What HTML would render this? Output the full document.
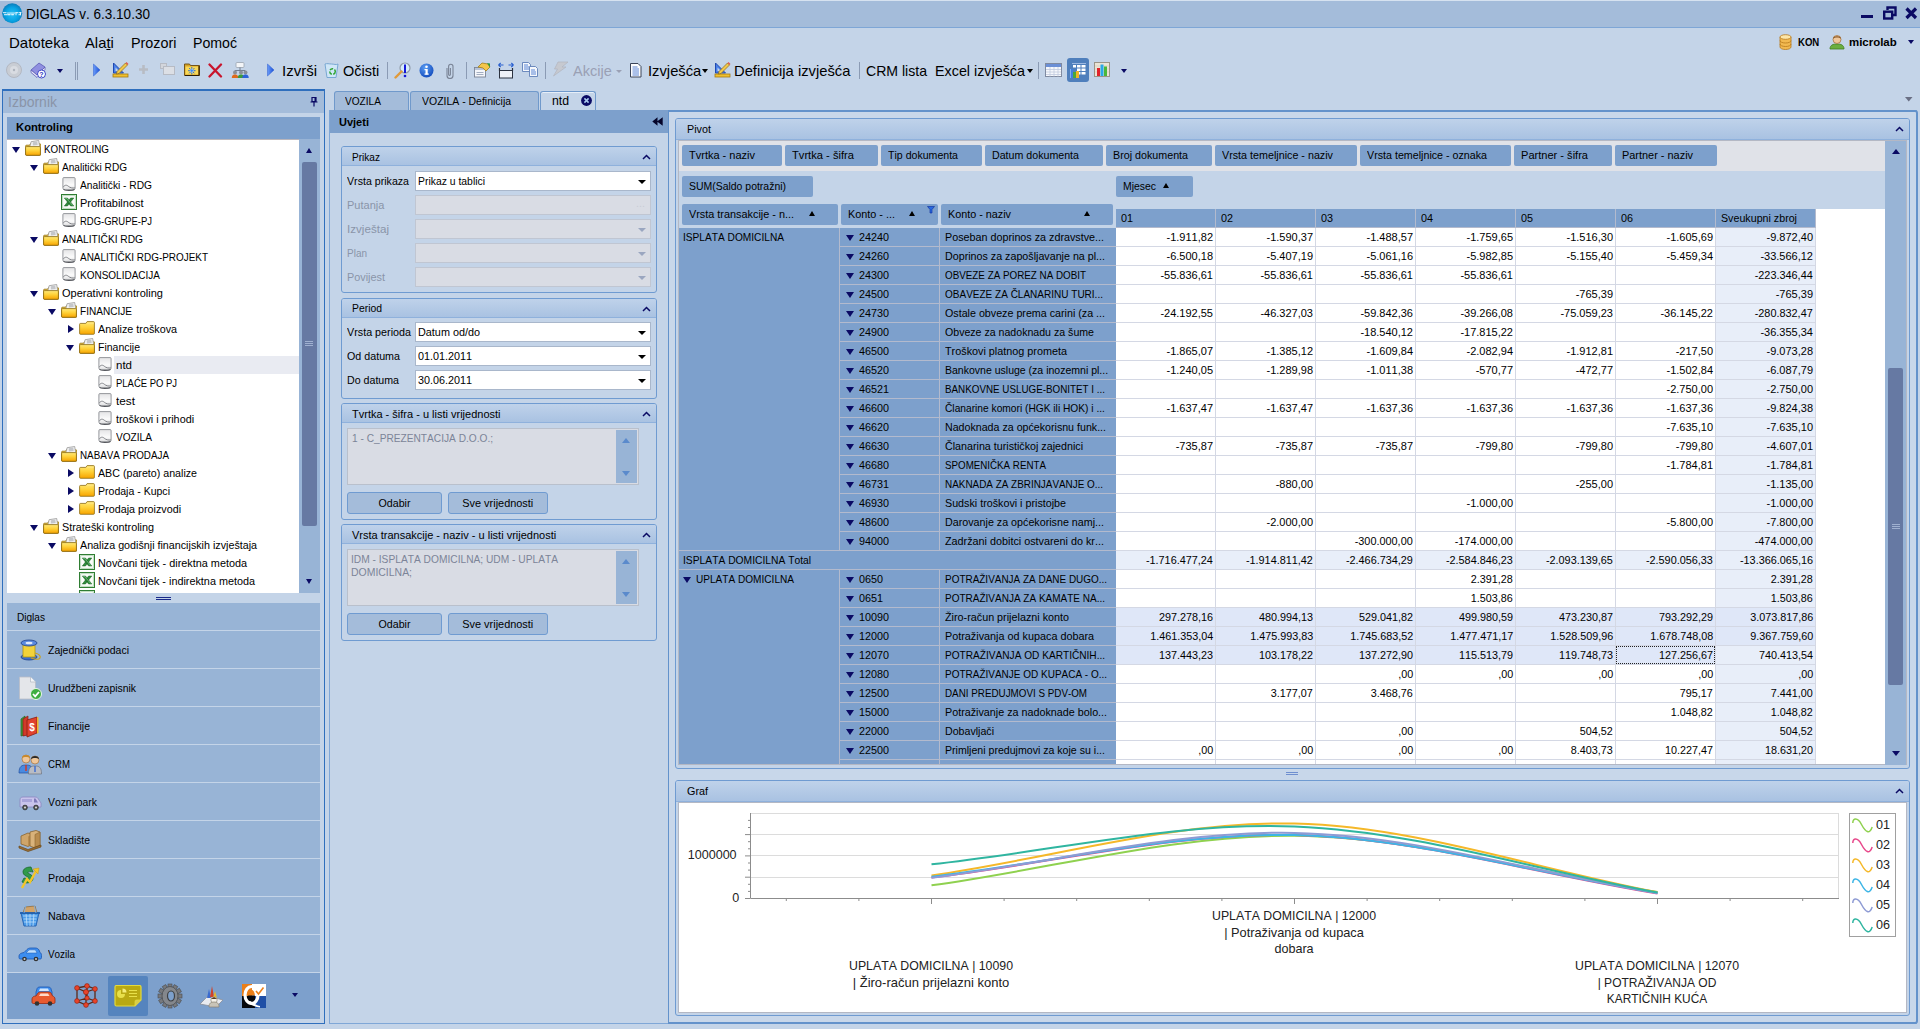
<!DOCTYPE html>
<html><head><meta charset="utf-8"><title>DIGLAS</title>
<style>
*{box-sizing:border-box;margin:0;padding:0}
html,body{width:1920px;height:1029px;overflow:hidden}
body{position:relative;background:#c4d4e8;font-family:"Liberation Sans",sans-serif;font-size:11px;color:#000;line-height:1;font-kerning:none}
.a{position:absolute}
.t{position:absolute;white-space:nowrap;line-height:1;font-kerning:none}
#titlebar{left:0;top:0;width:1920px;height:28px;background:#a4bcda;border-top:1px solid #d6e2f0;border-bottom:1px solid #7ea6d6}
.hdr{background:#7da0cc}
.b{font-weight:bold}
.f15{font-size:15px}
.f14{font-size:14px}
.f13{font-size:13px}
.f12{font-size:12px}
.gray{color:#8a94a6}
.sep{position:absolute;width:1px;background:#8b9bb4;top:62px;height:17px}
.tab{position:absolute;top:91px;height:20px;border:1px solid #7099cb;border-bottom:none;border-radius:3px 3px 0 0;background:#a4bcda}
.tab.act{background:#c4d4e8;height:21px}
.grp{position:absolute;border:1px solid #6f9bd1;border-radius:3px;background:#c4d4e8}
.grph{position:absolute;left:0;top:0;right:0;height:19px;background:linear-gradient(#bfd2ea,#a9c2e2);border-bottom:1px solid #8fb1dc;border-radius:2px 2px 0 0}
.inp{position:absolute;height:20px;border:1px solid #a9b7cb;background:#fff}
.inp.dis{background:#d9dce4;border-color:#c0c6d2}
.btn{position:absolute;height:22px;border:1px solid #6f9bd1;border-radius:3px;background:#a4bcda;text-align:center;line-height:20px;font-size:11px}
.fld{position:absolute;height:21px;background:#7da0cc;border-radius:2px;font-size:11px;line-height:21px;padding-left:6px;white-space:nowrap}
.tri-d{position:absolute;width:0;height:0;border-left:4px solid transparent;border-right:4px solid transparent;border-top:6px solid #0a0a64}
.tri-r{position:absolute;width:0;height:0;border-top:4px solid transparent;border-bottom:4px solid transparent;border-left:6px solid #0a0a64}
.tri-u{position:absolute;width:0;height:0;border-left:4px solid transparent;border-right:4px solid transparent;border-bottom:6px solid #000}
.ob{position:absolute;left:7px;width:313px;height:37px;background:#98b4d6}
.ob span{position:absolute;left:41px;top:14px;font-size:11px;white-space:nowrap}
</style></head>
<body>
<div class="a" id="titlebar"></div>
<svg class="a" style="left:2px;top:3px" width="21" height="21" viewBox="0 0 21 21"><defs><radialGradient id="lg" cx="0.5" cy="0.55" r="0.6"><stop offset="0" stop-color="#2cc0f4"/><stop offset="0.55" stop-color="#08a4e4"/><stop offset="1" stop-color="#0a72b0"/></radialGradient></defs><circle cx="10.200" cy="10.200" r="10" fill="url(#lg)"/><g fill="#e8f6fd"><rect x="1" y="9.200" width="3.500" height="1"/><rect x="2" y="11.200" width="3" height="1"/><rect x="5.500" y="9.200" width="1" height="3"/><rect x="5.500" y="11.200" width="2.500" height="1"/><rect x="7.500" y="9.200" width="1" height="3"/><rect x="9.500" y="9.200" width="1" height="3"/><rect x="9.500" y="11.200" width="2.500" height="1"/><rect x="11.500" y="9.200" width="1" height="2"/><rect x="13.500" y="9.200" width="2.500" height="1"/><rect x="13.500" y="9.200" width="1" height="3"/><rect x="16.500" y="9.200" width="3" height="1"/><rect x="16.500" y="11.200" width="2.500" height="1"/><rect x="18" y="9.200" width="1" height="3"/></g></svg>
<div class="t f14" style="left:26px;top:7px;transform:scaleX(0.965);transform-origin:left center">DIGLAS v. 6.3.10.30</div>
<div class="a" style="left:1861px;top:15px;width:12px;height:3px;background:#0a0a64"></div>
<svg class="a" style="left:1883px;top:6px" width="14" height="14" viewBox="0 0 14 14"><path d="M4.500 4V1.500h8v7.500H10" fill="none" stroke="#0a0a64" stroke-width="2.400"/><rect x="1.200" y="5.700" width="8" height="6.800" fill="none" stroke="#0a0a64" stroke-width="2.400"/></svg>
<svg class="a" style="left:1905px;top:7px" width="13" height="13" viewBox="0 0 13 13"><path d="M1.500 1.500l9.500 9.500M11 1.500l-9.500 9.500" stroke="#0a0a64" stroke-width="3.200"/></svg>
<div class="t f15" style="left:9px;top:35px">Datoteka</div>
<div class="t f15" style="left:85px;top:35px;transform:scaleX(0.986);transform-origin:left center">Ala<span style="text-decoration:underline">t</span>i</div>
<div class="t f15" style="left:131px;top:35px;transform:scaleX(0.957);transform-origin:left center">Prozori</div>
<div class="t f15" style="left:193px;top:35px;transform:scaleX(0.944);transform-origin:left center">Pomoć</div>
<svg class="a" style="left:1779px;top:34px" width="13" height="16" viewBox="0 0 13 16"><path d="M1 3v10c0 1.5 2.5 2.5 5.5 2.5S12 14.500 12 13V3z" fill="#f2b950" stroke="#b87a1c" stroke-width="0.8"/><ellipse cx="6.500" cy="3" rx="5.500" ry="2.300" fill="#fde6a8" stroke="#b87a1c" stroke-width="0.8"/><path d="M1 6.500c0 1.500 2.500 2.500 5.500 2.500s5.500-1 5.500-2.500M1 10c0 1.500 2.500 2.500 5.500 2.500s5.500-1 5.500-2.500" fill="none" stroke="#b87a1c" stroke-width="0.8"/></svg>
<div class="t b" style="left:1798px;top:37px;font-size:11px;transform:scaleX(0.870);transform-origin:left center">KON</div>
<svg class="a" style="left:1829px;top:34px" width="16" height="16" viewBox="0 0 16 16"><path d="M1 15c0-4 3-5 7-5s7 1 7 5z" fill="#6cae3e" stroke="#3f7d1e" stroke-width="0.8"/><circle cx="8" cy="5.500" r="4" fill="#f0c79a" stroke="#a7743d" stroke-width="0.8"/><path d="M4 4.500c0-3 8-3 8 0c-2-1.500-6-1.500-8 0z" fill="#8a5a2b"/></svg>
<div class="t b" style="left:1849px;top:37px;font-size:11px;transform:scaleX(1.040);transform-origin:left center">microlab</div>
<div class="tri-d" style="left:1908px;top:40px;border-left-width:3px;border-right-width:3px;border-top-width:4px"></div>
<svg class="a" style="left:6px;top:62px" width="16" height="16" viewBox="0 0 16 16"><circle cx="8" cy="8" r="7.500" fill="#c9cdd4" stroke="#b3b8c2"/><circle cx="8" cy="8" r="4" fill="#d9dce2"/><circle cx="8" cy="8" r="1.200" fill="#aeb3bd"/></svg>
<svg class="a" style="left:30px;top:62px" width="17" height="17" viewBox="0 0 17 17"><path d="M1 8l8-7 6 4-8 8z" fill="#8f8fe0" stroke="#5b5bb5" stroke-width="0.8"/><path d="M1 8v2.500l6 5 8-8V5l-8 8z" fill="#e6e6f7" stroke="#5b5bb5" stroke-width="0.8"/><circle cx="11.500" cy="12" r="4" fill="#fff" stroke="#3c46c8" stroke-width="1"/><text x="11.500" y="14.600" font-size="7" font-weight="bold" text-anchor="middle" fill="#2a34c0" font-family="Liberation Sans">?</text></svg>
<div class="tri-d" style="left:57px;top:69px;border-left-width:3px;border-right-width:3px;border-top-width:4px"></div>
<div class="a" style="left:75px;top:62px;width:1px;height:18px;background:#8b9bb4"></div><div class="a" style="left:77px;top:62px;width:1px;height:18px;background:#8b9bb4"></div>
<svg class="a" style="left:92px;top:63px" width="9" height="14" viewBox="0 0 9 14"><defs><linearGradient id="pg" x1="0" y1="0" x2="1" y2="0"><stop offset="0" stop-color="#6a9cf8"/><stop offset="1" stop-color="#1c50d8"/></linearGradient></defs><path d="M1.500 1l6.500 6-6.500 6z" fill="url(#pg)" stroke="#2a5ad0" stroke-width="0.500"/></svg>
<svg class="a" style="left:112px;top:61px" width="17" height="17" viewBox="0 0 17 17"><path d="M1.500 2v10h10z" fill="#4a80e8" stroke="#1f49b0" stroke-width="1"/><path d="M3.500 6.500v3.500h3.500z" fill="#c4d4e8"/><rect x="1" y="13" width="15" height="3" fill="#f0c030" stroke="#a67c10" stroke-width="0.8"/><path d="M5 10.500L13.500 2l2 2L7 12.500l-2.600 0.600z" fill="#f2c84a" stroke="#8a6a18" stroke-width="0.700"/><path d="M13.500 2l1-1 2 2-1 1z" fill="#e05a4a"/></svg>
<svg class="a" style="left:139px;top:65px" width="9" height="9" viewBox="0 0 9 9"><path d="M3.200 0h2.600v3.200H9v2.600H5.800V9H3.200V5.800H0V3.200h3.200z" fill="#b8bcc4"/></svg>
<svg class="a" style="left:160px;top:63px" width="16" height="14" viewBox="0 0 16 14"><rect x="0.500" y="0.500" width="6" height="5" fill="#d3d6dc" stroke="#b7bbc4"/><rect x="3.500" y="3.500" width="11" height="8" fill="#dcdfe5" stroke="#b7bbc4"/></svg>
<svg class="a" style="left:184px;top:62px" width="16" height="15" viewBox="0 0 16 15"><path d="M0.500 2h5l1 1.500h9v10h-15z" fill="#d8a428" stroke="#6a4a0e" stroke-width="0.900"/><path d="M1.500 4.500h12.500v8h-12.500z" fill="#f8d858"/><path d="M15 4v9.500H1" fill="none" stroke="#2a1c06" stroke-width="1"/><path d="M7.800 5v7.400M4.100 8.700h7.400M5.200 6.100l5.200 5.200M10.400 6.100l-5.200 5.200" stroke="#1c5fd6" stroke-width="0.900"/><circle cx="7.800" cy="8.700" r="1.600" fill="#3a8af0" stroke="#d8ecff" stroke-width="0.500"/></svg>
<svg class="a" style="left:208px;top:63px" width="15" height="15" viewBox="0 0 15 15"><path d="M1.500 1.500L13 13.500M13 1.500L1.500 13.500" stroke="#c8142c" stroke-width="2.300" stroke-linecap="round"/></svg>
<svg class="a" style="left:231px;top:62px" width="18" height="17" viewBox="0 0 18 17"><rect x="5" y="0.500" width="8" height="5" rx="1" fill="#f3f5f8" stroke="#9aa3b0" stroke-width="0.8"/><path d="M9 5.500v3M4 10V8.500h10V10" fill="none" stroke="#6a7484" stroke-width="0.9"/><circle cx="4" cy="10.500" r="2" fill="#8a8f98"/><path d="M0.800 16c0-3 1.500-3.600 3.200-3.600S7.200 13 7.200 16z" fill="#e06a1a"/><circle cx="10" cy="10.500" r="2" fill="#8a8f98"/><path d="M6.800 16c0-3 1.500-3.600 3.200-3.600s3.200 0.600 3.200 3.600z" fill="#3d9a3a"/><circle cx="14.500" cy="10.500" r="2" fill="#8a8f98"/><path d="M11.300 16c0-3 1.500-3.600 3.200-3.600s3.200 0.600 3.200 3.600z" fill="#2c62d8"/></svg>
<svg class="a" style="left:266px;top:63px" width="9" height="14" viewBox="0 0 9 14"><defs><linearGradient id="pg" x1="0" y1="0" x2="1" y2="0"><stop offset="0" stop-color="#6a9cf8"/><stop offset="1" stop-color="#1c50d8"/></linearGradient></defs><path d="M1.500 1l6.500 6-6.500 6z" fill="url(#pg)" stroke="#2a5ad0" stroke-width="0.500"/></svg>
<div class="t f15" style="left:282px;top:63px">Izvrši</div>
<svg class="a" style="left:324px;top:62px" width="15" height="17" viewBox="0 0 15 17"><path d="M1 2l2 13.500h9L14 2c-2 1.200-4 0-6.500 0S3 1.200 1 2z" fill="#cfe6f7" stroke="#6fa1cf" stroke-width="0.9"/><circle cx="8.500" cy="9.500" r="2.800" fill="none" stroke="#2fa531" stroke-width="1.500" stroke-dasharray="3.500 1.500"/></svg>
<div class="t f15" style="left:343px;top:63px;transform:scaleX(0.963);transform-origin:left center">Očisti</div>
<div class="sep" style="left:387px"></div>
<svg class="a" style="left:394px;top:62px" width="18" height="17" viewBox="0 0 18 17"><circle cx="11" cy="6" r="5" fill="#d6ecfb" stroke="#8f9aa8" stroke-width="1.200"/><path d="M7.500 9.500L1.500 15.500" stroke="#e09a3a" stroke-width="2.400" stroke-linecap="round"/><path d="M11 2.500v8.500" stroke="#1418d8" stroke-width="2"/><circle cx="11" cy="14" r="1.300" fill="#1418d8"/></svg>
<svg class="a" style="left:419px;top:63px" width="15" height="15" viewBox="0 0 15 15"><defs><radialGradient id="ig" cx="0.4" cy="0.3" r="0.8"><stop offset="0" stop-color="#5a9cf2"/><stop offset="1" stop-color="#0b43b8"/></radialGradient></defs><circle cx="7.500" cy="7.500" r="7" fill="url(#ig)"/><rect x="6.500" y="6" width="2.200" height="5.500" fill="#fff"/><rect x="5.500" y="6" width="2" height="1.200" fill="#fff"/><rect x="5.500" y="10.500" width="4.200" height="1.200" fill="#fff"/><circle cx="7.500" cy="3.700" r="1.300" fill="#fff"/></svg>
<svg class="a" style="left:445px;top:63px" width="10" height="16" viewBox="0 0 10 16"><path d="M2 5v7.500a3 3 0 0 0 6 0V3.500a2.200 2.200 0 0 0-4.400 0v8a0.900 0.900 0 0 0 1.800 0V5" fill="none" stroke="#7a8496" stroke-width="1.100"/></svg>
<div class="sep" style="left:466px"></div>
<svg class="a" style="left:474px;top:62px" width="17" height="16" viewBox="0 0 17 16"><rect x="0.500" y="5.500" width="11" height="9.500" fill="#f4f6fa" stroke="#7a8496" stroke-width="0.9"/><rect x="1" y="6" width="10" height="2" fill="#b7c3d8"/><path d="M2.500 10.500h7M2.500 12.500h7" stroke="#9aa6ba" stroke-width="0.9"/><path d="M4 5l4-4 6 1 2 3-4 4-3-3z" fill="#f3c64a" stroke="#a5801c" stroke-width="0.8"/><path d="M13 1l3 0.500v4z" fill="#2f9a3a"/></svg>
<svg class="a" style="left:498px;top:62px" width="16" height="17" viewBox="0 0 16 17"><path d="M0.500 3h5M0.500 3l2.200-2M0.500 3l2.200 2M15.500 3h-5M15.500 3l-2.200-2M15.500 3l-2.200 2" stroke="#2a60d0" stroke-width="1.100" fill="none"/><path d="M1.500 6v3M14.500 6v3" stroke="#2b3240" stroke-width="1.200"/><rect x="1.500" y="8.500" width="13" height="7.500" fill="#eef1f7" stroke="#2b3240" stroke-width="1"/></svg>
<svg class="a" style="left:522px;top:62px" width="16" height="15" viewBox="0 0 16 15"><path d="M0.500 0.500h6l2 2v7h-8z" fill="#f4f7fc" stroke="#5f7fb8" stroke-width="0.9"/><path d="M2 3h4M2 5h5M2 7h5" stroke="#4a78d0" stroke-width="0.9"/><path d="M7.500 4.500h6l2 2v8h-8z" fill="#f4f7fc" stroke="#5f7fb8" stroke-width="0.9"/><path d="M9 8h4M9 10h5M9 12h5" stroke="#4a78d0" stroke-width="0.9"/></svg>
<div class="sep" style="left:545px"></div>
<svg class="a" style="left:552px;top:61px" width="17" height="16" viewBox="0 0 17 16"><path d="M6 1h10l-6 5h4L1.500 15l4-7H2.500z" fill="#c6c9d0" stroke="#b1b5be" stroke-width="0.700"/></svg>
<div class="t f15" style="left:573px;top:63px;color:#9aa0b4;transform:scaleX(0.973);transform-origin:left center">Akcije</div>
<div class="tri-d" style="left:616px;top:70px;border-left-width:3px;border-right-width:3px;border-top-width:3px;border-top-color:#9aa0b4"></div>
<svg class="a" style="left:630px;top:63px" width="12" height="15" viewBox="0 0 12 15"><path d="M0.500 0.500h7.500l3 3v10.500h-10.500z" fill="#fbfcfe" stroke="#3b4458" stroke-width="1"/><path d="M2.500 4h5M2.500 6h6.500M2.500 8h6.500M2.500 10h6.500M2.500 12h6.500" stroke="#4a78d0" stroke-width="0.9"/></svg>
<div class="t f15" style="left:648px;top:63px;transform:scaleX(0.984);transform-origin:left center">Izvješća</div>
<div class="tri-d" style="left:702px;top:69px;border-left-width:3px;border-right-width:3px;border-top-width:4px;border-top-color:#000"></div>
<svg class="a" style="left:714px;top:61px" width="17" height="17" viewBox="0 0 17 17"><path d="M1.500 2v10h10z" fill="#4a80e8" stroke="#1f49b0" stroke-width="1"/><path d="M3.500 6.500v3.500h3.500z" fill="#c4d4e8"/><rect x="1" y="13" width="15" height="3" fill="#f0c030" stroke="#a67c10" stroke-width="0.8"/><path d="M5 10.500L13.500 2l2 2L7 12.500l-2.600 0.600z" fill="#f2c84a" stroke="#8a6a18" stroke-width="0.700"/><path d="M13.500 2l1-1 2 2-1 1z" fill="#e05a4a"/></svg>
<div class="t f15" style="left:734px;top:63px;transform:scaleX(0.983);transform-origin:left center">Definicija izvješća</div>
<div class="sep" style="left:859px"></div>
<div class="t f15" style="left:866px;top:63px;transform:scaleX(0.939);transform-origin:left center">CRM lista</div>
<div class="t f15" style="left:935px;top:63px;transform:scaleX(0.955);transform-origin:left center">Excel izvješća</div>
<div class="tri-d" style="left:1027px;top:69px;border-left-width:3px;border-right-width:3px;border-top-width:4px;border-top-color:#000"></div>
<div class="sep" style="left:1038px"></div>
<svg class="a" style="left:1045px;top:63px" width="17" height="14" viewBox="0 0 17 14"><rect x="0.500" y="0.500" width="16" height="13" fill="#f6f8fc" stroke="#7f8aa0" stroke-width="1"/><rect x="1" y="1" width="15" height="3" fill="#6b8fd6"/><path d="M1 6.500h15M1 9h15M1 11.500h15M5 4v9.500M9 4v9.500M13 4v9.500" stroke="#c2cade" stroke-width="0.8"/></svg>
<div class="a" style="left:1067px;top:58px;width:22px;height:24px;background:#4f7fbc;border-radius:3px"></div>
<svg class="a" style="left:1069px;top:62px" width="18" height="17" viewBox="0 0 18 17"><rect x="3" y="1" width="14" height="1" fill="#9db8e0"/><g fill="#fff"><rect x="4" y="3" width="3" height="2.500"/><rect x="8" y="3" width="3.500" height="2.500"/><rect x="12.500" y="3" width="4" height="2.500"/><rect x="8" y="6.500" width="3.500" height="2.500"/><rect x="12.500" y="6.500" width="4" height="2.500"/><rect x="12.500" y="10" width="4" height="2.500"/><rect x="10" y="10" width="1.500" height="2.500"/></g><rect x="1" y="7" width="3" height="9" fill="#3f7fe0"/><rect x="1" y="7" width="1" height="9" fill="#7fb0f5"/><rect x="4" y="10" width="3" height="6" fill="#4aa83a"/><rect x="7" y="9" width="3" height="7" fill="#f0b428"/></svg>
<svg class="a" style="left:1094px;top:62px" width="16" height="16" viewBox="0 0 16 16"><rect x="0.500" y="0.500" width="15" height="14" fill="#ebe4d6" stroke="#9a9488" stroke-width="1"/><path d="M1 4h14M1 7h14M1 10h14" stroke="#d8cfbc" stroke-width="0.700"/><rect x="3" y="6" width="3" height="8" fill="#e0222a"/><rect x="6.500" y="2.500" width="3" height="11.500" fill="#2aa8e8"/><rect x="10" y="4.500" width="3" height="9.500" fill="#4ab83a"/></svg>
<div class="tri-d" style="left:1121px;top:69px;border-left-width:3px;border-right-width:3px;border-top-width:4px"></div>
<svg class="a" width="0" height="0" style="left:0;top:0"><defs><linearGradient id="gf" x1="0" y1="0" x2="0" y2="1"><stop offset="0" stop-color="#ffe97a"/><stop offset="0.45" stop-color="#ffd23a"/><stop offset="1" stop-color="#f7a400"/></linearGradient><linearGradient id="gb" x1="0" y1="0" x2="0" y2="1"><stop offset="0" stop-color="#ffd640"/><stop offset="1" stop-color="#f0a800"/></linearGradient><linearGradient id="gd" x1="0" y1="0" x2="0" y2="1"><stop offset="0" stop-color="#e4e4e6"/><stop offset="0.6" stop-color="#fbfbfb"/><stop offset="1" stop-color="#dcdcde"/></linearGradient></defs></svg>
<div class="a" style="left:2px;top:89px;width:323px;height:935px;border:1px solid #2f6fbd;border-top-width:2px;background:#c4d4e8"></div>
<div class="a" style="left:3px;top:91px;width:321px;height:22px;background:#a4bcda"></div>
<div class="t f14" style="left:8px;top:95px;color:#8a94a8">Izbornik</div>
<svg class="a" style="left:310px;top:97px" width="8" height="10" viewBox="0 0 8 10"><path d="M2 0.500h4v4H2zM0.500 5h7M4 5v4.500" stroke="#0a0a64" stroke-width="1.200" fill="none"/><rect x="4.500" y="1" width="1.500" height="3.500" fill="#0a0a64"/></svg>
<div class="a hdr" style="left:7px;top:117px;width:313px;height:22px"></div>
<div class="t b" style="left:16px;top:122px;font-size:11px;transform:scaleX(1.023);transform-origin:left center">Kontroling</div>
<div class="a" style="left:7px;top:139px;width:292px;height:454px;background:#fff;overflow:hidden" id="tree">
<div class="tri-d" style="left:5px;top:8px;border-top-width:6px"></div>
<svg class="a" style="left:18px;top:1px" width="16" height="16" viewBox="0 0 16 16"><path d="M0.600 6.200c0-0.700 0.300-1 1-1h2.600l1.400-1.400h9.200c0.700 0 1 0.300 1 1v9.500c0 0.700-0.300 1-1 1H1.600c-0.700 0-1-0.300-1-1z" fill="url(#gb)" stroke="#8a6914" stroke-width="0.800"/><path d="M4.600 7.500l1.500-5.800 7.600-1.200 1.100 6.800z" fill="#f2f2f2" stroke="#8c8c8c" stroke-width="0.700"/><path d="M7.800 2.300l4.400-0.700 0.500 3.300-4.800 0.500z" fill="#c4c6ca"/><path d="M0.600 7.600c0-0.700 0.300-1 1-1h12.800c0.700 0 1 0.300 1 1v6.700c0 0.700-0.300 1-1 1H1.600c-0.700 0-1-0.300-1-1z" fill="url(#gf)" stroke="#8a6914" stroke-width="0.800"/></svg>
<div class="t" style="left:37px;top:5px;transform:scaleX(0.894);transform-origin:left center">KONTROLING</div>
<div class="tri-d" style="left:23px;top:26px;border-top-width:6px"></div>
<svg class="a" style="left:36px;top:19px" width="16" height="16" viewBox="0 0 16 16"><path d="M0.600 6.200c0-0.700 0.300-1 1-1h2.600l1.400-1.400h9.200c0.700 0 1 0.300 1 1v9.500c0 0.700-0.300 1-1 1H1.600c-0.700 0-1-0.300-1-1z" fill="url(#gb)" stroke="#8a6914" stroke-width="0.800"/><path d="M4.600 7.500l1.500-5.800 7.600-1.200 1.100 6.800z" fill="#f2f2f2" stroke="#8c8c8c" stroke-width="0.700"/><path d="M7.800 2.300l4.400-0.700 0.500 3.300-4.800 0.500z" fill="#c4c6ca"/><path d="M0.600 7.600c0-0.700 0.300-1 1-1h12.800c0.700 0 1 0.300 1 1v6.700c0 0.700-0.300 1-1 1H1.600c-0.700 0-1-0.300-1-1z" fill="url(#gf)" stroke="#8a6914" stroke-width="0.800"/></svg>
<div class="t" style="left:55px;top:23px;transform:scaleX(0.917);transform-origin:left center">Analitički RDG</div>
<svg class="a" style="left:55px;top:38px" width="15" height="15" viewBox="0 0 15 15"><path d="M0.900 1.600c0-0.700 0.300-1 1-1h10.200c0.700 0 1 0.300 1 1v9.400c0 1.200-0.800 2-2 2H3.400c-1.600 0-2.500-0.900-2.500-2.500z" fill="url(#gd)" stroke="#8a8c92" stroke-width="0.900"/><path d="M1.200 10.200c1.500-2.600 3.500-2.400 5.200-0.900s4 2 6.500 1.600" fill="none" stroke="#77797f" stroke-width="0.900"/><path d="M1.500 12.400c2 1.200 8 1.400 11 0" fill="none" stroke="#55575c" stroke-width="1.100"/></svg>
<div class="t" style="left:73px;top:41px;transform:scaleX(0.928);transform-origin:left center">Analitički - RDG</div>
<svg class="a" style="left:54px;top:55px" width="16" height="16" viewBox="0 0 16 16"><rect x="0.500" y="0.500" width="15" height="15" fill="#fbfdfb" stroke="#2f7d32" stroke-width="1"/><rect x="1.700" y="1.700" width="12.600" height="12.600" fill="none" stroke="#a9d0aa" stroke-width="0.800"/><path d="M3.300 4h3.200l6.300 8h-3.200zM9.600 4h3.200l-6.300 8H3.300z" fill="#2e8b3a" stroke="#1a5e22" stroke-width="0.500"/><path d="M4.300 4.500h1.600l5.700 7" stroke="#8fd09a" stroke-width="0.600" fill="none"/></svg>
<div class="t" style="left:73px;top:59px">Profitabilnost</div>
<svg class="a" style="left:55px;top:74px" width="15" height="15" viewBox="0 0 15 15"><path d="M0.900 1.600c0-0.700 0.300-1 1-1h10.200c0.700 0 1 0.300 1 1v9.400c0 1.200-0.800 2-2 2H3.400c-1.600 0-2.500-0.900-2.500-2.500z" fill="url(#gd)" stroke="#8a8c92" stroke-width="0.900"/><path d="M1.200 10.200c1.500-2.600 3.500-2.400 5.200-0.900s4 2 6.500 1.600" fill="none" stroke="#77797f" stroke-width="0.900"/><path d="M1.500 12.400c2 1.200 8 1.400 11 0" fill="none" stroke="#55575c" stroke-width="1.100"/></svg>
<div class="t" style="left:73px;top:77px;transform:scaleX(0.860);transform-origin:left center">RDG-GRUPE-PJ</div>
<div class="tri-d" style="left:23px;top:98px;border-top-width:6px"></div>
<svg class="a" style="left:36px;top:91px" width="16" height="16" viewBox="0 0 16 16"><path d="M0.600 6.200c0-0.700 0.300-1 1-1h2.600l1.400-1.400h9.200c0.700 0 1 0.300 1 1v9.500c0 0.700-0.300 1-1 1H1.600c-0.700 0-1-0.300-1-1z" fill="url(#gb)" stroke="#8a6914" stroke-width="0.800"/><path d="M4.600 7.500l1.500-5.800 7.600-1.200 1.100 6.800z" fill="#f2f2f2" stroke="#8c8c8c" stroke-width="0.700"/><path d="M7.800 2.300l4.400-0.700 0.500 3.300-4.800 0.500z" fill="#c4c6ca"/><path d="M0.600 7.600c0-0.700 0.300-1 1-1h12.800c0.700 0 1 0.300 1 1v6.700c0 0.700-0.300 1-1 1H1.600c-0.700 0-1-0.300-1-1z" fill="url(#gf)" stroke="#8a6914" stroke-width="0.800"/></svg>
<div class="t" style="left:55px;top:95px;transform:scaleX(0.927);transform-origin:left center">ANALITIČKI RDG</div>
<svg class="a" style="left:55px;top:110px" width="15" height="15" viewBox="0 0 15 15"><path d="M0.900 1.600c0-0.700 0.300-1 1-1h10.200c0.700 0 1 0.300 1 1v9.400c0 1.200-0.800 2-2 2H3.400c-1.600 0-2.500-0.900-2.500-2.500z" fill="url(#gd)" stroke="#8a8c92" stroke-width="0.900"/><path d="M1.200 10.200c1.500-2.600 3.500-2.400 5.200-0.900s4 2 6.500 1.600" fill="none" stroke="#77797f" stroke-width="0.900"/><path d="M1.500 12.400c2 1.200 8 1.400 11 0" fill="none" stroke="#55575c" stroke-width="1.100"/></svg>
<div class="t" style="left:73px;top:113px;transform:scaleX(0.903);transform-origin:left center">ANALITIČKI RDG-PROJEKT</div>
<svg class="a" style="left:55px;top:128px" width="15" height="15" viewBox="0 0 15 15"><path d="M0.900 1.600c0-0.700 0.300-1 1-1h10.200c0.700 0 1 0.300 1 1v9.400c0 1.200-0.800 2-2 2H3.400c-1.600 0-2.500-0.900-2.500-2.500z" fill="url(#gd)" stroke="#8a8c92" stroke-width="0.900"/><path d="M1.200 10.200c1.500-2.600 3.500-2.400 5.200-0.900s4 2 6.500 1.600" fill="none" stroke="#77797f" stroke-width="0.900"/><path d="M1.500 12.400c2 1.200 8 1.400 11 0" fill="none" stroke="#55575c" stroke-width="1.100"/></svg>
<div class="t" style="left:73px;top:131px;transform:scaleX(0.909);transform-origin:left center">KONSOLIDACIJA</div>
<div class="tri-d" style="left:23px;top:152px;border-top-width:6px"></div>
<svg class="a" style="left:36px;top:145px" width="16" height="16" viewBox="0 0 16 16"><path d="M0.600 6.200c0-0.700 0.300-1 1-1h2.600l1.400-1.400h9.200c0.700 0 1 0.300 1 1v9.500c0 0.700-0.300 1-1 1H1.600c-0.700 0-1-0.300-1-1z" fill="url(#gb)" stroke="#8a6914" stroke-width="0.800"/><path d="M4.600 7.500l1.500-5.800 7.600-1.200 1.100 6.800z" fill="#f2f2f2" stroke="#8c8c8c" stroke-width="0.700"/><path d="M7.800 2.300l4.400-0.700 0.500 3.300-4.800 0.500z" fill="#c4c6ca"/><path d="M0.600 7.600c0-0.700 0.300-1 1-1h12.800c0.700 0 1 0.300 1 1v6.700c0 0.700-0.300 1-1 1H1.600c-0.700 0-1-0.300-1-1z" fill="url(#gf)" stroke="#8a6914" stroke-width="0.800"/></svg>
<div class="t" style="left:55px;top:149px">Operativni kontroling</div>
<div class="tri-d" style="left:41px;top:170px;border-top-width:6px"></div>
<svg class="a" style="left:54px;top:163px" width="16" height="16" viewBox="0 0 16 16"><path d="M0.600 6.200c0-0.700 0.300-1 1-1h2.600l1.400-1.400h9.200c0.700 0 1 0.300 1 1v9.500c0 0.700-0.300 1-1 1H1.600c-0.700 0-1-0.300-1-1z" fill="url(#gb)" stroke="#8a6914" stroke-width="0.800"/><path d="M4.600 7.500l1.500-5.800 7.600-1.200 1.100 6.800z" fill="#f2f2f2" stroke="#8c8c8c" stroke-width="0.700"/><path d="M7.800 2.300l4.400-0.700 0.500 3.300-4.800 0.500z" fill="#c4c6ca"/><path d="M0.600 7.600c0-0.700 0.300-1 1-1h12.800c0.700 0 1 0.300 1 1v6.700c0 0.700-0.300 1-1 1H1.600c-0.700 0-1-0.300-1-1z" fill="url(#gf)" stroke="#8a6914" stroke-width="0.800"/></svg>
<div class="t" style="left:73px;top:167px;transform:scaleX(0.915);transform-origin:left center">FINANCIJE</div>
<div class="tri-r" style="left:61px;top:186px"></div>
<svg class="a" style="left:72px;top:181px" width="16" height="16" viewBox="0 0 16 16"><path d="M0.600 4.400c0-0.700 0.300-1 1-1h5.200l1.300-1.800h6.300c0.700 0 1 0.300 1 1v10.700c0 0.700-0.300 1-1 1H1.600c-0.700 0-1-0.300-1-1z" fill="url(#gf)" stroke="#8a6914" stroke-width="0.800"/><path d="M8.200 3.200h6.600" stroke="#ffe98a" stroke-width="0.800"/></svg>
<div class="t" style="left:91px;top:185px;transform:scaleX(0.979);transform-origin:left center">Analize troškova</div>
<div class="tri-d" style="left:59px;top:206px;border-top-width:6px"></div>
<svg class="a" style="left:72px;top:199px" width="16" height="16" viewBox="0 0 16 16"><path d="M0.600 6.200c0-0.700 0.300-1 1-1h2.600l1.400-1.400h9.200c0.700 0 1 0.300 1 1v9.500c0 0.700-0.300 1-1 1H1.600c-0.700 0-1-0.300-1-1z" fill="url(#gb)" stroke="#8a6914" stroke-width="0.800"/><path d="M4.600 7.500l1.500-5.800 7.600-1.200 1.100 6.800z" fill="#f2f2f2" stroke="#8c8c8c" stroke-width="0.700"/><path d="M7.800 2.300l4.400-0.700 0.500 3.300-4.800 0.500z" fill="#c4c6ca"/><path d="M0.600 7.600c0-0.700 0.300-1 1-1h12.800c0.700 0 1 0.300 1 1v6.700c0 0.700-0.300 1-1 1H1.600c-0.700 0-1-0.300-1-1z" fill="url(#gf)" stroke="#8a6914" stroke-width="0.800"/></svg>
<div class="t" style="left:91px;top:203px;transform:scaleX(0.954);transform-origin:left center">Financije</div>
<div class="a" style="left:107px;top:217px;width:300px;height:18px;background:#e9ebf2"></div>
<svg class="a" style="left:91px;top:218px" width="15" height="15" viewBox="0 0 15 15"><path d="M0.900 1.600c0-0.700 0.300-1 1-1h10.200c0.700 0 1 0.300 1 1v9.400c0 1.200-0.800 2-2 2H3.400c-1.600 0-2.500-0.900-2.500-2.500z" fill="url(#gd)" stroke="#8a8c92" stroke-width="0.900"/><path d="M1.200 10.200c1.500-2.600 3.500-2.400 5.200-0.900s4 2 6.500 1.600" fill="none" stroke="#77797f" stroke-width="0.900"/><path d="M1.500 12.400c2 1.200 8 1.400 11 0" fill="none" stroke="#55575c" stroke-width="1.100"/></svg>
<div class="t" style="left:109px;top:221px;transform:scaleX(1.046);transform-origin:left center">ntd</div>
<svg class="a" style="left:91px;top:236px" width="15" height="15" viewBox="0 0 15 15"><path d="M0.900 1.600c0-0.700 0.300-1 1-1h10.200c0.700 0 1 0.300 1 1v9.400c0 1.200-0.800 2-2 2H3.400c-1.600 0-2.500-0.900-2.500-2.500z" fill="url(#gd)" stroke="#8a8c92" stroke-width="0.900"/><path d="M1.200 10.200c1.500-2.600 3.500-2.400 5.200-0.900s4 2 6.500 1.600" fill="none" stroke="#77797f" stroke-width="0.900"/><path d="M1.500 12.400c2 1.200 8 1.400 11 0" fill="none" stroke="#55575c" stroke-width="1.100"/></svg>
<div class="t" style="left:109px;top:239px;transform:scaleX(0.860);transform-origin:left center">PLAĆE PO PJ</div>
<svg class="a" style="left:91px;top:254px" width="15" height="15" viewBox="0 0 15 15"><path d="M0.900 1.600c0-0.700 0.300-1 1-1h10.200c0.700 0 1 0.300 1 1v9.400c0 1.200-0.800 2-2 2H3.400c-1.600 0-2.500-0.900-2.500-2.500z" fill="url(#gd)" stroke="#8a8c92" stroke-width="0.900"/><path d="M1.200 10.200c1.500-2.600 3.500-2.400 5.200-0.900s4 2 6.500 1.600" fill="none" stroke="#77797f" stroke-width="0.900"/><path d="M1.500 12.400c2 1.200 8 1.400 11 0" fill="none" stroke="#55575c" stroke-width="1.100"/></svg>
<div class="t" style="left:109px;top:257px;transform:scaleX(1.072);transform-origin:left center">test</div>
<svg class="a" style="left:91px;top:272px" width="15" height="15" viewBox="0 0 15 15"><path d="M0.900 1.600c0-0.700 0.300-1 1-1h10.200c0.700 0 1 0.300 1 1v9.400c0 1.200-0.800 2-2 2H3.400c-1.600 0-2.500-0.900-2.500-2.500z" fill="url(#gd)" stroke="#8a8c92" stroke-width="0.900"/><path d="M1.200 10.200c1.500-2.600 3.500-2.400 5.200-0.900s4 2 6.500 1.600" fill="none" stroke="#77797f" stroke-width="0.900"/><path d="M1.500 12.400c2 1.200 8 1.400 11 0" fill="none" stroke="#55575c" stroke-width="1.100"/></svg>
<div class="t" style="left:109px;top:275px;transform:scaleX(0.982);transform-origin:left center">troškovi i prihodi</div>
<svg class="a" style="left:91px;top:290px" width="15" height="15" viewBox="0 0 15 15"><path d="M0.900 1.600c0-0.700 0.300-1 1-1h10.200c0.700 0 1 0.300 1 1v9.400c0 1.200-0.800 2-2 2H3.400c-1.600 0-2.500-0.900-2.500-2.500z" fill="url(#gd)" stroke="#8a8c92" stroke-width="0.900"/><path d="M1.200 10.200c1.500-2.600 3.500-2.400 5.200-0.900s4 2 6.500 1.600" fill="none" stroke="#77797f" stroke-width="0.900"/><path d="M1.500 12.400c2 1.200 8 1.400 11 0" fill="none" stroke="#55575c" stroke-width="1.100"/></svg>
<div class="t" style="left:109px;top:293px;transform:scaleX(0.920);transform-origin:left center">VOZILA</div>
<div class="tri-d" style="left:41px;top:314px;border-top-width:6px"></div>
<svg class="a" style="left:54px;top:307px" width="16" height="16" viewBox="0 0 16 16"><path d="M0.600 6.200c0-0.700 0.300-1 1-1h2.600l1.400-1.400h9.200c0.700 0 1 0.300 1 1v9.500c0 0.700-0.300 1-1 1H1.600c-0.700 0-1-0.300-1-1z" fill="url(#gb)" stroke="#8a6914" stroke-width="0.800"/><path d="M4.600 7.500l1.500-5.800 7.600-1.200 1.100 6.800z" fill="#f2f2f2" stroke="#8c8c8c" stroke-width="0.700"/><path d="M7.800 2.300l4.400-0.700 0.500 3.300-4.800 0.500z" fill="#c4c6ca"/><path d="M0.600 7.600c0-0.700 0.300-1 1-1h12.800c0.700 0 1 0.300 1 1v6.700c0 0.700-0.300 1-1 1H1.600c-0.700 0-1-0.300-1-1z" fill="url(#gf)" stroke="#8a6914" stroke-width="0.800"/></svg>
<div class="t" style="left:73px;top:311px;transform:scaleX(0.893);transform-origin:left center">NABAVA PRODAJA</div>
<div class="tri-r" style="left:61px;top:330px"></div>
<svg class="a" style="left:72px;top:325px" width="16" height="16" viewBox="0 0 16 16"><path d="M0.600 4.400c0-0.700 0.300-1 1-1h5.200l1.300-1.800h6.300c0.700 0 1 0.300 1 1v10.700c0 0.700-0.300 1-1 1H1.600c-0.700 0-1-0.300-1-1z" fill="url(#gf)" stroke="#8a6914" stroke-width="0.800"/><path d="M8.200 3.200h6.600" stroke="#ffe98a" stroke-width="0.800"/></svg>
<div class="t" style="left:91px;top:329px;transform:scaleX(0.970);transform-origin:left center">ABC (pareto) analize</div>
<div class="tri-r" style="left:61px;top:348px"></div>
<svg class="a" style="left:72px;top:343px" width="16" height="16" viewBox="0 0 16 16"><path d="M0.600 4.400c0-0.700 0.300-1 1-1h5.200l1.300-1.800h6.300c0.700 0 1 0.300 1 1v10.700c0 0.700-0.300 1-1 1H1.600c-0.700 0-1-0.300-1-1z" fill="url(#gf)" stroke="#8a6914" stroke-width="0.800"/><path d="M8.200 3.200h6.600" stroke="#ffe98a" stroke-width="0.800"/></svg>
<div class="t" style="left:91px;top:347px;transform:scaleX(0.957);transform-origin:left center">Prodaja - Kupci</div>
<div class="tri-r" style="left:61px;top:366px"></div>
<svg class="a" style="left:72px;top:361px" width="16" height="16" viewBox="0 0 16 16"><path d="M0.600 4.400c0-0.700 0.300-1 1-1h5.200l1.300-1.800h6.300c0.700 0 1 0.300 1 1v10.700c0 0.700-0.300 1-1 1H1.600c-0.700 0-1-0.300-1-1z" fill="url(#gf)" stroke="#8a6914" stroke-width="0.800"/><path d="M8.200 3.200h6.600" stroke="#ffe98a" stroke-width="0.800"/></svg>
<div class="t" style="left:91px;top:365px;transform:scaleX(0.977);transform-origin:left center">Prodaja proizvodi</div>
<div class="tri-d" style="left:23px;top:386px;border-top-width:6px"></div>
<svg class="a" style="left:36px;top:379px" width="16" height="16" viewBox="0 0 16 16"><path d="M0.600 6.200c0-0.700 0.300-1 1-1h2.600l1.400-1.400h9.200c0.700 0 1 0.300 1 1v9.500c0 0.700-0.300 1-1 1H1.600c-0.700 0-1-0.300-1-1z" fill="url(#gb)" stroke="#8a6914" stroke-width="0.800"/><path d="M4.600 7.500l1.500-5.800 7.600-1.200 1.100 6.800z" fill="#f2f2f2" stroke="#8c8c8c" stroke-width="0.700"/><path d="M7.800 2.300l4.400-0.700 0.500 3.300-4.800 0.500z" fill="#c4c6ca"/><path d="M0.600 7.600c0-0.700 0.300-1 1-1h12.800c0.700 0 1 0.300 1 1v6.700c0 0.700-0.300 1-1 1H1.600c-0.700 0-1-0.300-1-1z" fill="url(#gf)" stroke="#8a6914" stroke-width="0.800"/></svg>
<div class="t" style="left:55px;top:383px;transform:scaleX(0.984);transform-origin:left center">Strateški kontroling</div>
<div class="tri-d" style="left:41px;top:404px;border-top-width:6px"></div>
<svg class="a" style="left:54px;top:397px" width="16" height="16" viewBox="0 0 16 16"><path d="M0.600 6.200c0-0.700 0.300-1 1-1h2.600l1.400-1.400h9.200c0.700 0 1 0.300 1 1v9.500c0 0.700-0.300 1-1 1H1.600c-0.700 0-1-0.300-1-1z" fill="url(#gb)" stroke="#8a6914" stroke-width="0.800"/><path d="M4.600 7.500l1.500-5.800 7.600-1.200 1.100 6.800z" fill="#f2f2f2" stroke="#8c8c8c" stroke-width="0.700"/><path d="M7.800 2.300l4.400-0.700 0.500 3.300-4.800 0.500z" fill="#c4c6ca"/><path d="M0.600 7.600c0-0.700 0.300-1 1-1h12.800c0.700 0 1 0.300 1 1v6.700c0 0.700-0.300 1-1 1H1.600c-0.700 0-1-0.300-1-1z" fill="url(#gf)" stroke="#8a6914" stroke-width="0.800"/></svg>
<div class="t" style="left:73px;top:401px;transform:scaleX(0.975);transform-origin:left center">Analiza godišnji financijskih izvještaja</div>
<svg class="a" style="left:72px;top:415px" width="16" height="16" viewBox="0 0 16 16"><rect x="0.500" y="0.500" width="15" height="15" fill="#fbfdfb" stroke="#2f7d32" stroke-width="1"/><rect x="1.700" y="1.700" width="12.600" height="12.600" fill="none" stroke="#a9d0aa" stroke-width="0.800"/><path d="M3.300 4h3.200l6.300 8h-3.200zM9.600 4h3.200l-6.300 8H3.300z" fill="#2e8b3a" stroke="#1a5e22" stroke-width="0.500"/><path d="M4.300 4.500h1.600l5.700 7" stroke="#8fd09a" stroke-width="0.600" fill="none"/></svg>
<div class="t" style="left:91px;top:419px;transform:scaleX(0.987);transform-origin:left center">Novčani tijek - direktna metoda</div>
<svg class="a" style="left:72px;top:433px" width="16" height="16" viewBox="0 0 16 16"><rect x="0.500" y="0.500" width="15" height="15" fill="#fbfdfb" stroke="#2f7d32" stroke-width="1"/><rect x="1.700" y="1.700" width="12.600" height="12.600" fill="none" stroke="#a9d0aa" stroke-width="0.800"/><path d="M3.300 4h3.200l6.300 8h-3.200zM9.600 4h3.200l-6.300 8H3.300z" fill="#2e8b3a" stroke="#1a5e22" stroke-width="0.500"/><path d="M4.300 4.500h1.600l5.700 7" stroke="#8fd09a" stroke-width="0.600" fill="none"/></svg>
<div class="t" style="left:91px;top:437px;transform:scaleX(0.984);transform-origin:left center">Novčani tijek - indirektna metoda</div>
<svg class="a" style="left:72px;top:451px" width="16" height="16" viewBox="0 0 16 16"><rect x="0.500" y="0.500" width="15" height="15" fill="#fbfdfb" stroke="#2f7d32" stroke-width="1"/><rect x="1.700" y="1.700" width="12.600" height="12.600" fill="none" stroke="#a9d0aa" stroke-width="0.800"/><path d="M3.300 4h3.200l6.300 8h-3.200zM9.600 4h3.200l-6.300 8H3.300z" fill="#2e8b3a" stroke="#1a5e22" stroke-width="0.500"/><path d="M4.300 4.500h1.600l5.700 7" stroke="#8fd09a" stroke-width="0.600" fill="none"/></svg>
<div class="t" style="left:91px;top:455px"></div>
</div>
<div class="a" style="left:7px;top:139px;width:313px;height:1px;background:#b9b6bc"></div>
<div class="a" style="left:299px;top:139px;width:21px;height:454px;background:#98b4d6"></div>
<div class="a" style="left:302px;top:162px;width:15px;height:364px;background:#6679a3;border-radius:2px"></div>
<div class="tri-u" style="left:306px;top:148px;border-bottom-color:#0a0a64;border-bottom-width:5px;border-left-width:3.500px;border-right-width:3.500px"></div>
<div class="tri-d" style="left:306px;top:579px;border-top-width:5px;border-left-width:3.500px;border-right-width:3.500px"></div>
<div class="a" style="left:305px;top:341px;width:8px;height:1px;background:#9fb0d0"></div><div class="a" style="left:305px;top:343px;width:8px;height:1px;background:#9fb0d0"></div><div class="a" style="left:305px;top:345px;width:8px;height:1px;background:#9fb0d0"></div>
<div class="a" style="left:156px;top:597px;width:15px;height:1px;background:#1a2a8a"></div><div class="a" style="left:156px;top:599px;width:15px;height:1px;background:#1a2a8a"></div>
<div class="a" style="left:7px;top:603px;width:313px;height:27px;background:#98b4d6"></div>
<div class="t" style="left:17px;top:612px;transform:scaleX(0.916);transform-origin:left center">Diglas</div>
<div class="ob" style="top:631px"><span style="transform:scaleX(0.953);transform-origin:left center">Zajednički podaci</span></div>
<svg class="a" style="left:18px;top:638px" width="24" height="24" viewBox="0 0 24 24"><ellipse cx="11" cy="19" rx="8" ry="3" fill="#3b6fd0" stroke="#1d3f8a" stroke-width="0.8"/><rect x="5" y="5" width="12" height="14" fill="#f2d23a" stroke="#b39614" stroke-width="0.8"/><ellipse cx="11" cy="5" rx="8" ry="3" fill="#5a8ae0" stroke="#1d3f8a" stroke-width="0.8"/><ellipse cx="11" cy="5" rx="3.500" ry="1.300" fill="#dfe9fb"/><path d="M17 15c4 1 6 3 5 5s-6 1-9 0" fill="none" stroke="#c9a21a" stroke-width="1.200"/></svg>
<div class="ob" style="top:669px"><span style="transform:scaleX(0.947);transform-origin:left center">Urudžbeni zapisnik</span></div>
<svg class="a" style="left:18px;top:676px" width="24" height="24" viewBox="0 0 24 24"><path d="M1.500 1h11l5 5v17h-16z" fill="#e4e6ea" stroke="#b9bdc6" stroke-width="0.8"/><path d="M12.500 1v5h5" fill="#f4f5f7" stroke="#b9bdc6" stroke-width="0.8"/><circle cx="18" cy="18" r="5.500" fill="#3fae3f" stroke="#e9f7e9" stroke-width="1"/><path d="M15 18l2.200 2.300 3.800-4.300" fill="none" stroke="#fff" stroke-width="1.800"/></svg>
<div class="ob" style="top:707px"><span style="transform:scaleX(0.954);transform-origin:left center">Financije</span></div>
<svg class="a" style="left:18px;top:714px" width="24" height="24" viewBox="0 0 24 24"><path d="M3 5l4-3v19l-4 1z" fill="#3f9a3a" stroke="#256a22" stroke-width="0.700"/><path d="M5 5l5-3v19l-5 1z" fill="#d03a2a" stroke="#8a1d12" stroke-width="0.700"/><path d="M9 6l10-3v16l-10 4z" fill="#e0422e" stroke="#8a1d12" stroke-width="0.800"/><path d="M19 3l1.500 0.500v15.500l-1.500 0.500z" fill="#f0b428"/><text x="14" y="17" font-size="10" font-weight="bold" text-anchor="middle" fill="#fff" font-family="Liberation Sans">$</text></svg>
<div class="ob" style="top:745px"><span style="transform:scaleX(0.878);transform-origin:left center">CRM</span></div>
<svg class="a" style="left:18px;top:752px" width="24" height="24" viewBox="0 0 24 24"><circle cx="8" cy="7" r="4" fill="#f0c79a" stroke="#a7743d" stroke-width="0.700"/><path d="M4 6c0-4 8-4 8 0c-2-1.500-6-1.500-8 0z" fill="#c98a2b"/><path d="M1 21c0-7 3-8 7-8s7 1 7 8z" fill="#4a8ae0" stroke="#24509e" stroke-width="0.700"/><path d="M8 13v6" stroke="#d03a2a" stroke-width="1.500"/><circle cx="17" cy="8" r="4" fill="#f0c79a" stroke="#a7743d" stroke-width="0.700"/><path d="M13 7c0-4 8-4 8 0c-2-1.500-6-1.500-8 0z" fill="#2a2a2a"/><path d="M10.500 22c0-7 2.500-8 6.500-8s6.500 1 6.500 8z" fill="#b9bcc4" stroke="#6f737c" stroke-width="0.700"/><path d="M17 14v6" stroke="#3f6fd0" stroke-width="1.500"/></svg>
<div class="ob" style="top:783px"><span style="transform:scaleX(0.943);transform-origin:left center">Vozni park</span></div>
<svg class="a" style="left:18px;top:790px" width="24" height="24" viewBox="0 0 24 24"><path d="M2 10c0-2 1-3 3-3h12c2 0 3 1 4 3l2 3v4H2z" fill="#c9c4ec" stroke="#8b86c0" stroke-width="0.800"/><path d="M16 8.500h1.500l2.500 4h-4z" fill="#7f7ab8"/><rect x="4" y="9" width="10" height="3" fill="#a9a4da"/><circle cx="7" cy="17.500" r="2.400" fill="#555" stroke="#222" stroke-width="0.600"/><circle cx="18" cy="17.500" r="2.400" fill="#555" stroke="#222" stroke-width="0.600"/><circle cx="7" cy="17.500" r="1" fill="#ddd"/><circle cx="18" cy="17.500" r="1" fill="#ddd"/></svg>
<div class="ob" style="top:821px"><span style="transform:scaleX(0.941);transform-origin:left center">Skladište</span></div>
<svg class="a" style="left:18px;top:828px" width="24" height="24" viewBox="0 0 24 24"><path d="M3 8l7-3 4 1.500v10l-4 2-7-2.500z" fill="#cfa56a" stroke="#8a6430" stroke-width="0.800"/><path d="M10 8.500l4-2v10l-4 2z" fill="#b98c4e"/><path d="M12 4l6-1.500 4 1.500v13l-5 3-5-2z" fill="#d9b27a" stroke="#8a6430" stroke-width="0.800"/><path d="M17 6.500l5-2.500v13l-5 3z" fill="#b98c4e" stroke="#8a6430" stroke-width="0.600"/><path d="M1 18l9 3.500 13-4.500v2l-13 4.500L1 20z" fill="#9a6e35" stroke="#6a4718" stroke-width="0.700"/></svg>
<div class="ob" style="top:859px"><span style="transform:scaleX(0.976);transform-origin:left center">Prodaja</span></div>
<svg class="a" style="left:18px;top:866px" width="24" height="24" viewBox="0 0 24 24"><path d="M13 1c-5 0-8 2-8 5s3 4 5 5-1 2-4 1l-2 4c4 2 11 1 11-4 0-3-4-4-5-5s2-2 5-1z" fill="#2f9a4a" stroke="#1d6a30" stroke-width="0.800"/><path d="M4 22l5-9 3 3 6-11" fill="none" stroke="#f2c52a" stroke-width="2.400"/><path d="M15 3l6-1-1 6z" fill="#f2c52a" stroke="#c99a10" stroke-width="0.500"/></svg>
<div class="ob" style="top:897px"><span style="transform:scaleX(0.976);transform-origin:left center">Nabava</span></div>
<svg class="a" style="left:18px;top:904px" width="24" height="24" viewBox="0 0 24 24"><path d="M3 9h18l-3 13H6z" fill="#4a9ae8" stroke="#1f5fb0" stroke-width="0.900"/><path d="M5 12h14M5.500 15h13M6 18h12M8 9l1 13M12 9v13M16 9l-1 13" stroke="#bfe0fb" stroke-width="0.800"/><path d="M7 3l10-1 2 7H5z" fill="#d2a368" stroke="#8a6430" stroke-width="0.700"/><path d="M2 9h20" stroke="#1f5fb0" stroke-width="1.800"/><path d="M8 1l-2 8M16 1l2 8" stroke="#7ab4ee" stroke-width="0.800"/></svg>
<div class="ob" style="top:935px"><span style="transform:scaleX(0.901);transform-origin:left center">Vozila</span></div>
<svg class="a" style="left:18px;top:942px" width="24" height="24" viewBox="0 0 24 24"><path d="M1 14c0-2 2-3 5-3.500l3-3c1-1 2-1.500 4-1.500h4c2 0 3 0.500 4 2l1 2.500c1 0.500 1.500 1.500 1.500 3v2c0 1-0.500 1.500-1.500 1.500H2.500c-1 0-1.500-0.500-1.500-1.500z" fill="#3d8ef0" stroke="#1a55b0" stroke-width="0.800"/><path d="M8 11l2.500-2.500c0.500-0.500 1-0.700 2-0.700h3.500c1 0 1.500 0.200 2 1l1 2.200z" fill="#bfe0ff" stroke="#1a55b0" stroke-width="0.500"/><circle cx="6.500" cy="17" r="2.300" fill="#333"/><circle cx="6.500" cy="17" r="1" fill="#ccc"/><circle cx="18" cy="17" r="2.300" fill="#333"/><circle cx="18" cy="17" r="1" fill="#ccc"/></svg>
<div class="a hdr" style="left:7px;top:973px;width:313px;height:46px"></div>
<div class="a" style="left:108px;top:976px;width:40px;height:40px;background:#5584be;border-radius:2px"></div>
<svg class="a" style="left:31px;top:983px" width="26" height="26" viewBox="0 0 26 26"><path d="M6 6c0-1 1-2 3-2h8c2 0 3 1 3 2l1 3v4H5V9z" fill="#3d8ef0" stroke="#1a55b0" stroke-width="0.800"/><path d="M8 8l1-2.500h8L18 8z" fill="#cfe6ff"/><path d="M1 16c0-2 2-3 4-3l2-3c1-1 2-1 3-1h7c2 0 3 0.500 3.500 2l1 2c1.500 0.500 2.500 1.500 2.500 3v3c0 1-0.500 1.500-1.500 1.500H2.500C1.500 20.500 1 20 1 19z" fill="#e85a30" stroke="#9a2a10" stroke-width="0.800"/><path d="M8 13l1.500-2.500h7.500l1.500 2.500z" fill="#ffd9c8"/><circle cx="6" cy="20.500" r="2.300" fill="#333"/><circle cx="19" cy="20.500" r="2.300" fill="#333"/></svg>
<svg class="a" style="left:73px;top:983px" width="26" height="26" viewBox="0 0 26 26"><path d="M4 5l10-2 8 3v12l-9 4-9-4zM4 5l9 4 9-3M13 9v13M4 5v13M14 3v12l8 3M14 15l-10 3" fill="none" stroke="#5a2a1a" stroke-width="1.300"/><g fill="#e8442a" stroke="#8a1d0c" stroke-width="0.600"><circle cx="4" cy="5" r="2.400"/><circle cx="14" cy="3" r="2.400"/><circle cx="22" cy="6" r="2.400"/><circle cx="13" cy="9" r="2.600"/><circle cx="4" cy="18" r="2.400"/><circle cx="13" cy="22" r="2.400"/><circle cx="22" cy="18" r="2.400"/><circle cx="14" cy="15" r="2.200"/></g></svg>
<svg class="a" style="left:114px;top:985px" width="28" height="22" viewBox="0 0 28 22"><path d="M1 2c0-1 0.500-1.500 1.500-1.500h23c1 0 1.500 0.500 1.500 1.500v13l-6 6H2.500c-1 0-1.500-0.500-1.500-1.500z" fill="#b9a912" stroke="#e4da3c" stroke-width="1.200"/><path d="M21 21v-4.500c0-1 0.500-1.500 1.500-1.500H27" fill="#d8cc4a" stroke="#e4da3c" stroke-width="0.800"/><path d="M7 5a4 4 0 1 0 4 4H7z" fill="#e8e04a"/><path d="M8.500 3.500v4h4a4 4 0 0 0-4-4z" fill="#f4ec7a"/><path d="M15 5.500h8M15 8.500h8M15 11.500h8" stroke="#e8e04a" stroke-width="1.200"/></svg>
<svg class="a" style="left:157px;top:983px" width="26" height="26" viewBox="0 0 26 26"><g transform="translate(13 13)"><g fill="#77797d" stroke="#4a4c50" stroke-width="0.600"><rect x="-2" y="-12" width="4" height="6" transform="rotate(0)"/><rect x="-2" y="-12" width="4" height="6" transform="rotate(30)"/><rect x="-2" y="-12" width="4" height="6" transform="rotate(60)"/><rect x="-2" y="-12" width="4" height="6" transform="rotate(90)"/><rect x="-2" y="-12" width="4" height="6" transform="rotate(120)"/><rect x="-2" y="-12" width="4" height="6" transform="rotate(150)"/><rect x="-2" y="-12" width="4" height="6" transform="rotate(180)"/><rect x="-2" y="-12" width="4" height="6" transform="rotate(210)"/><rect x="-2" y="-12" width="4" height="6" transform="rotate(240)"/><rect x="-2" y="-12" width="4" height="6" transform="rotate(270)"/><rect x="-2" y="-12" width="4" height="6" transform="rotate(300)"/><rect x="-2" y="-12" width="4" height="6" transform="rotate(330)"/></g><ellipse cx="0" cy="0" rx="8" ry="9.500" fill="#84878c" stroke="#4a4c50" stroke-width="0.800"/><ellipse cx="1" cy="0" rx="3.500" ry="5" fill="#7da0cc" stroke="#3e4044" stroke-width="1.200"/></g></svg>
<svg class="a" style="left:199px;top:983px" width="26" height="26" viewBox="0 0 26 26"><path d="M1 21l8-8 15 4-7 7z" fill="#e9ebf0" stroke="#8a8f9a" stroke-width="0.800"/><path d="M8 15l2-9 2 9z" fill="#3a6ad0"/><path d="M11 14l2-11 2 11z" fill="#d0422a"/><path d="M14 15l2-7 2 7z" fill="#e8b82a"/><circle cx="15" cy="17" r="3.200" fill="#f6f2ea" stroke="#8a8272" stroke-width="0.700"/><path d="M10 24c0-4 2-5 5-5s5 1 5 5z" fill="#c9c4b8" stroke="#8a8272" stroke-width="0.700"/><path d="M12 16l3-2 3 2" fill="#5a3a1a"/></svg>
<svg class="a" style="left:242px;top:984px" width="24" height="24" viewBox="0 0 24 24"><rect x="0" y="0" width="24" height="24" fill="#fff"/><rect x="0" y="0" width="10" height="12" fill="#ea7f1a"/><rect x="0" y="12" width="13" height="12" fill="#05070c"/><rect x="13" y="12" width="11" height="12" fill="#1f4fa6"/><ellipse cx="9.500" cy="11" rx="6.500" ry="8.500" fill="none" stroke="#fff" stroke-width="3.200"/><path d="M6.100 11.500A3.400 5.800 0 0 1 12.900 11.500z" fill="#ea7f1a"/><path d="M6.100 11.500A3.400 5.800 0 0 0 12.900 11.500z" fill="#05070c"/><path d="M3 12h7v6H3z" fill="#05070c" opacity="0"/><path d="M7 17c3 0 5 3 9 4.500l2 0.500v1.500c-5 0-8-3-12-3.500z" fill="#fff"/><path d="M14 7l2.500 3 5-6.500" fill="none" stroke="#ea7f1a" stroke-width="1.600"/></svg>
<div class="tri-d" style="left:292px;top:993px;border-left-width:3px;border-right-width:3px;border-top-width:4px"></div>
<div class="tab" style="left:334px;width:75px"></div><div class="t" style="left:345px;top:96px;transform:scaleX(0.920);transform-origin:left center">VOZILA</div>
<div class="tab" style="left:410px;width:129px"></div><div class="t" style="left:422px;top:96px;transform:scaleX(0.952);transform-origin:left center">VOZILA - Definicija</div>
<div class="a" style="left:329px;top:110px;width:1588px;height:914px;border:1px solid #7fa7d7;border-top:1px solid #7fa7d7;background:#c4d4e8"></div>
<div class="tab act" style="left:540px;width:56px;box-shadow:inset 0 1px 0 #e6eef8"></div><div class="t f12" style="left:552px;top:95px;transform:scaleX(1.024);transform-origin:left center">ntd</div>
<svg class="a" style="left:581px;top:95px" width="11" height="11" viewBox="0 0 11 11"><circle cx="5.500" cy="5.500" r="5.400" fill="#0a0a64"/><path d="M3.400 3.400l4.200 4.200M7.600 3.400L3.400 7.600" stroke="#a9c9ee" stroke-width="1.500"/></svg>
<svg class="a" style="left:1905px;top:97px" width="8" height="5" viewBox="0 0 8 5"><path d="M0 0h7.500L3.750 4.500z" fill="#6a6f84"/></svg>
<div class="a" style="left:330px;top:111px;width:338px;height:912px;background:#c4d4e8"></div>
<div class="a hdr" style="left:330px;top:110px;width:338px;height:23px"></div>
<div class="t b" style="left:339px;top:117px;font-size:11px">Uvjeti</div>
<svg class="a" style="left:652px;top:117px" width="11" height="9" viewBox="0 0 11 9"><path d="M5.500 0.300v8.400L0.300 4.500zM10.700 0.300v8.400L5 4.500z" fill="#05052a"/></svg>
<div class="grp" style="left:341px;top:146px;width:316px;height:147px"><div class="grph"></div></div>
<div class="t" style="left:352px;top:152px;transform:scaleX(0.916);transform-origin:left center">Prikaz</div>
<svg class="a" style="left:642px;top:154px" width="9" height="6" viewBox="0 0 9 6"><path d="M1 5l3.500-3.500L8 5" fill="none" stroke="#0a0a64" stroke-width="1.500"/></svg>
<div class="t" style="left:347px;top:176px;;transform:scaleX(0.966);transform-origin:left center">Vrsta prikaza</div>
<div class="inp" style="left:415px;top:171px;width:236px"></div>
<div class="t" style="left:418px;top:176px;transform:scaleX(0.945);transform-origin:left center">Prikaz u tablici</div>
<div class="tri-d" style="left:638px;top:180px;border-left-width:4px;border-right-width:4px;border-top-width:4px;border-top-color:#000"></div>
<div class="t" style="left:347px;top:200px;color:#8a94a8">Putanja</div>
<div class="inp dis" style="left:415px;top:195px;width:236px"></div>
<div class="t" style="left:636px;top:198px;color:#c9ccd6;transform:scaleX(0.981);transform-origin:left center">...</div>
<div class="t" style="left:347px;top:224px;color:#8a94a8;transform:scaleX(1.057);transform-origin:left center">Izvještaj</div>
<div class="inp dis" style="left:415px;top:219px;width:236px"></div>
<div class="tri-d" style="left:638px;top:228px;border-left-width:4px;border-right-width:4px;border-top-width:4px;border-top-color:#9aa6c0"></div>
<div class="t" style="left:347px;top:248px;color:#8a94a8;transform:scaleX(0.909);transform-origin:left center">Plan</div>
<div class="inp dis" style="left:415px;top:243px;width:236px"></div>
<div class="tri-d" style="left:638px;top:252px;border-left-width:4px;border-right-width:4px;border-top-width:4px;border-top-color:#9aa6c0"></div>
<div class="t" style="left:347px;top:272px;color:#8a94a8;transform:scaleX(0.987);transform-origin:left center">Povijest</div>
<div class="inp dis" style="left:415px;top:267px;width:236px"></div>
<div class="tri-d" style="left:638px;top:276px;border-left-width:4px;border-right-width:4px;border-top-width:4px;border-top-color:#9aa6c0"></div>
<div class="grp" style="left:341px;top:298px;width:316px;height:101px"><div class="grph"></div></div>
<div class="t" style="left:352px;top:303px;transform:scaleX(0.944);transform-origin:left center">Period</div>
<svg class="a" style="left:642px;top:306px" width="9" height="6" viewBox="0 0 9 6"><path d="M1 5l3.500-3.500L8 5" fill="none" stroke="#0a0a64" stroke-width="1.500"/></svg>
<div class="t" style="left:347px;top:327px;transform:scaleX(0.978);transform-origin:left center">Vrsta perioda</div>
<div class="inp" style="left:415px;top:322px;width:236px"></div>
<div class="t" style="left:418px;top:327px;transform:scaleX(0.985);transform-origin:left center">Datum od/do</div>
<div class="tri-d" style="left:638px;top:331px;border-left-width:4px;border-right-width:4px;border-top-width:4px;border-top-color:#000"></div>
<div class="t" style="left:347px;top:351px;transform:scaleX(0.974);transform-origin:left center">Od datuma</div>
<div class="inp" style="left:415px;top:346px;width:236px"></div>
<div class="t" style="left:418px;top:351px;transform:scaleX(0.981);transform-origin:left center">01.01.2011</div>
<div class="tri-d" style="left:638px;top:355px;border-left-width:4px;border-right-width:4px;border-top-width:4px;border-top-color:#000"></div>
<div class="t" style="left:347px;top:375px;transform:scaleX(0.967);transform-origin:left center">Do datuma</div>
<div class="inp" style="left:415px;top:370px;width:236px"></div>
<div class="t" style="left:418px;top:375px;transform:scaleX(0.981);transform-origin:left center">30.06.2011</div>
<div class="tri-d" style="left:638px;top:379px;border-left-width:4px;border-right-width:4px;border-top-width:4px;border-top-color:#000"></div>
<div class="grp" style="left:341px;top:403px;width:316px;height:117px"><div class="grph"></div></div>
<div class="t" style="left:352px;top:409px">Tvrtka - šifra - u listi vrijednosti</div>
<svg class="a" style="left:642px;top:411px" width="9" height="6" viewBox="0 0 9 6"><path d="M1 5l3.500-3.500L8 5" fill="none" stroke="#0a0a64" stroke-width="1.500"/></svg>
<div class="a" style="left:347px;top:428px;width:292px;height:57px;background:#d9dce4;border:1px solid #b9c0cc"></div>
<div class="a" style="left:616px;top:430px;width:21px;height:53px;background:#98b4d6"></div>
<div class="tri-u" style="left:622px;top:438px;border-bottom-color:#5a8acc;border-bottom-width:5px"></div>
<div class="tri-d" style="left:622px;top:471px;border-top-color:#5a8acc;border-top-width:5px"></div>
<div class="t" style="left:352px;top:433px;color:#7c8498;transform:scaleX(0.923);transform-origin:left center">1 - C_PREZENTACIJA D.O.O.;</div>
<div class="btn" style="left:347px;top:492px;width:95px"><span style="display:inline-block;transform:scaleX(0.969)">Odabir</span></div>
<div class="btn" style="left:448px;top:492px;width:100px"><span style="display:inline-block;transform:scaleX(0.993)">Sve vrijednosti</span></div>
<div class="grp" style="left:341px;top:524px;width:316px;height:117px"><div class="grph"></div></div>
<div class="t" style="left:352px;top:530px">Vrsta transakcije - naziv - u listi vrijednosti</div>
<svg class="a" style="left:642px;top:532px" width="9" height="6" viewBox="0 0 9 6"><path d="M1 5l3.500-3.500L8 5" fill="none" stroke="#0a0a64" stroke-width="1.500"/></svg>
<div class="a" style="left:347px;top:549px;width:292px;height:57px;background:#d9dce4;border:1px solid #b9c0cc"></div>
<div class="a" style="left:616px;top:551px;width:21px;height:53px;background:#98b4d6"></div>
<div class="tri-u" style="left:622px;top:559px;border-bottom-color:#5a8acc;border-bottom-width:5px"></div>
<div class="tri-d" style="left:622px;top:592px;border-top-color:#5a8acc;border-top-width:5px"></div>
<div class="t" style="left:351px;top:554px;color:#7c8498;transform:scaleX(0.928);transform-origin:left center">IDM - ISPLATA DOMICILNA; UDM - UPLATA</div>
<div class="t" style="left:351px;top:567px;color:#7c8498;transform:scaleX(0.951);transform-origin:left center">DOMICILNA;</div>
<div class="btn" style="left:347px;top:613px;width:95px"><span style="display:inline-block;transform:scaleX(0.969)">Odabir</span></div>
<div class="btn" style="left:448px;top:613px;width:100px"><span style="display:inline-block;transform:scaleX(0.993)">Sve vrijednosti</span></div>
<div class="a" style="left:668px;top:110px;width:1250px;height:914px;border:2px solid #6392cb;border-left-width:1px;border-radius:0 3px 3px 0;background:#c8d7ea"></div>
<div class="grp" style="left:675px;top:118px;width:1235px;height:651px;border-color:#6f9bd1"><div class="grph" style="height:21px"></div></div>
<div class="t" style="left:687px;top:124px;transform:scaleX(0.981);transform-origin:left center">Pivot</div>
<svg class="a" style="left:1895px;top:126px" width="9" height="6" viewBox="0 0 9 6"><path d="M1 5l3.500-3.500L8 5" fill="none" stroke="#0a0a64" stroke-width="1.500"/></svg>
<div class="a" style="left:678px;top:140px;width:1229px;height:31px;background:#e0e2e8;border-top:1px solid #b4b8c4;border-left:1px solid #b4b8c4"></div>
<div class="a" style="left:678px;top:171px;width:1207px;height:57px;background:#c4d4e8"></div>
<div class="a" style="left:1116px;top:209px;width:769px;height:555px;background:#fff"></div>
<div class="fld" style="left:682px;top:145px;width:100px;padding-left:7px"><span style="display:inline-block;transform:scaleX(1.000);transform-origin:left center">Tvrtka - naziv</span></div>
<div class="fld" style="left:785px;top:145px;width:93px;padding-left:7px"><span style="display:inline-block;transform:scaleX(1.014);transform-origin:left center">Tvrtka - šifra</span></div>
<div class="fld" style="left:881px;top:145px;width:101px;padding-left:7px"><span style="display:inline-block;transform:scaleX(0.962);transform-origin:left center">Tip dokumenta</span></div>
<div class="fld" style="left:985px;top:145px;width:118px;padding-left:7px"><span style="display:inline-block;transform:scaleX(0.968);transform-origin:left center">Datum dokumenta</span></div>
<div class="fld" style="left:1106px;top:145px;width:106px;padding-left:7px"><span style="display:inline-block;transform:scaleX(0.974);transform-origin:left center">Broj dokumenta</span></div>
<div class="fld" style="left:1215px;top:145px;width:142px;padding-left:7px"><span style="display:inline-block;transform:scaleX(0.976);transform-origin:left center">Vrsta temeljnice - naziv</span></div>
<div class="fld" style="left:1360px;top:145px;width:151px;padding-left:7px"><span style="display:inline-block;transform:scaleX(0.972);transform-origin:left center">Vrsta temeljnice - oznaka</span></div>
<div class="fld" style="left:1514px;top:145px;width:98px;padding-left:7px"><span style="display:inline-block;transform:scaleX(1.006);transform-origin:left center">Partner - šifra</span></div>
<div class="fld" style="left:1615px;top:145px;width:102px;padding-left:7px"><span style="display:inline-block;transform:scaleX(0.993);transform-origin:left center">Partner - naziv</span></div>
<div class="fld" style="left:682px;top:176px;width:131px;padding-left:7px"><span style="display:inline-block;transform:scaleX(0.950);transform-origin:left center">SUM(Saldo potražni)</span></div>
<div class="fld" style="left:1116px;top:176px;width:77px;padding-left:7px"><span style="display:inline-block;transform:scaleX(0.947);transform-origin:left center">Mjesec</span></div>
<div class="tri-u" style="left:1163px;top:183px;border-bottom-width:5px;border-left-width:3.500px;border-right-width:3.500px"></div>
<div class="fld" style="left:682px;top:204px;width:156px;padding-left:7px"><span style="display:inline-block;transform:scaleX(0.987);transform-origin:left center">Vrsta transakcije - n...</span></div>
<div class="tri-u" style="left:809px;top:211px;border-bottom-width:5px;border-left-width:3.500px;border-right-width:3.500px"></div>
<div class="fld" style="left:841px;top:204px;width:97px;padding-left:7px"><span style="display:inline-block;transform:scaleX(0.985);transform-origin:left center">Konto - ...</span></div>
<div class="tri-u" style="left:909px;top:211px;border-bottom-width:5px;border-left-width:3.500px;border-right-width:3.500px"></div>
<svg class="a" style="left:927px;top:206px" width="8" height="8" viewBox="0 0 8 8"><path d="M0.500 0.500h7L5 3.500v3.500H3V3.500z" fill="#2a6ae0" stroke="#0a2a9a" stroke-width="0.600"/></svg>
<div class="fld" style="left:941px;top:204px;width:172px;padding-left:7px"><span style="display:inline-block;transform:scaleX(0.981);transform-origin:left center">Konto - naziv</span></div>
<div class="tri-u" style="left:1084px;top:211px;border-bottom-width:5px;border-left-width:3.500px;border-right-width:3.500px"></div>
<div class="a" style="left:1116px;top:209px;width:100px;height:19px;background:#7da0cc;border-right:1px solid #b3bacd;border-bottom:1px solid #b3bacd"></div>
<div class="t" style="left:1121px;top:213px;transform:scaleX(0.981);transform-origin:left center">01</div>
<div class="a" style="left:1216px;top:209px;width:100px;height:19px;background:#7da0cc;border-right:1px solid #b3bacd;border-bottom:1px solid #b3bacd"></div>
<div class="t" style="left:1221px;top:213px;transform:scaleX(0.981);transform-origin:left center">02</div>
<div class="a" style="left:1316px;top:209px;width:100px;height:19px;background:#7da0cc;border-right:1px solid #b3bacd;border-bottom:1px solid #b3bacd"></div>
<div class="t" style="left:1321px;top:213px;transform:scaleX(0.981);transform-origin:left center">03</div>
<div class="a" style="left:1416px;top:209px;width:100px;height:19px;background:#7da0cc;border-right:1px solid #b3bacd;border-bottom:1px solid #b3bacd"></div>
<div class="t" style="left:1421px;top:213px;transform:scaleX(0.981);transform-origin:left center">04</div>
<div class="a" style="left:1516px;top:209px;width:100px;height:19px;background:#7da0cc;border-right:1px solid #b3bacd;border-bottom:1px solid #b3bacd"></div>
<div class="t" style="left:1521px;top:213px;transform:scaleX(0.981);transform-origin:left center">05</div>
<div class="a" style="left:1616px;top:209px;width:100px;height:19px;background:#7da0cc;border-right:1px solid #b3bacd;border-bottom:1px solid #b3bacd"></div>
<div class="t" style="left:1621px;top:213px;transform:scaleX(0.981);transform-origin:left center">06</div>
<div class="a" style="left:1716px;top:209px;width:100px;height:19px;background:#7da0cc;border-right:1px solid #b3bacd;border-bottom:1px solid #b3bacd"></div>
<div class="t" style="left:1721px;top:213px;transform:scaleX(0.971);transform-origin:left center">Sveukupni zbroj</div>
<div class="a" style="left:679px;top:228px;width:437px;height:536px;background:#7da0cc"></div>
<div class="t" style="left:683px;top:232px;transform:scaleX(0.923);transform-origin:left center">ISPLATA DOMICILNA</div>
<div class="a" style="left:839px;top:228px;width:1px;height:19px;background:#b3bacd"></div>
<div class="a" style="left:939px;top:228px;width:1px;height:19px;background:#b3bacd"></div>
<div class="a" style="left:840px;top:246px;width:276px;height:1px;background:#b3bacd"></div>
<div class="tri-d" style="left:846px;top:235px;border-top-width:6px;border-left-width:4px;border-right-width:4px"></div>
<div class="t" style="left:859px;top:232px;transform:scaleX(0.981);transform-origin:left center">24240</div>
<div class="t" style="left:945px;top:232px;transform:scaleX(0.978);transform-origin:left center">Poseban doprinos za zdravstve...</div>
<div class="a" style="left:1116px;top:228px;width:100px;height:19px;background:#fff;border-right:1px solid #d4d8e4;border-bottom:1px solid #d4d8e4"></div>
<div class="t" style="right:707px;top:232px">-1.911,82</div>
<div class="a" style="left:1216px;top:228px;width:100px;height:19px;background:#fff;border-right:1px solid #d4d8e4;border-bottom:1px solid #d4d8e4"></div>
<div class="t" style="right:607px;top:232px">-1.590,37</div>
<div class="a" style="left:1316px;top:228px;width:100px;height:19px;background:#fff;border-right:1px solid #d4d8e4;border-bottom:1px solid #d4d8e4"></div>
<div class="t" style="right:507px;top:232px">-1.488,57</div>
<div class="a" style="left:1416px;top:228px;width:100px;height:19px;background:#fff;border-right:1px solid #d4d8e4;border-bottom:1px solid #d4d8e4"></div>
<div class="t" style="right:407px;top:232px">-1.759,65</div>
<div class="a" style="left:1516px;top:228px;width:100px;height:19px;background:#fff;border-right:1px solid #d4d8e4;border-bottom:1px solid #d4d8e4"></div>
<div class="t" style="right:307px;top:232px">-1.516,30</div>
<div class="a" style="left:1616px;top:228px;width:100px;height:19px;background:#fff;border-right:1px solid #d4d8e4;border-bottom:1px solid #d4d8e4"></div>
<div class="t" style="right:207px;top:232px">-1.605,69</div>
<div class="a" style="left:1716px;top:228px;width:100px;height:19px;background:#e8eef9;border-right:1px solid #d4d8e4;border-bottom:1px solid #d4d8e4"></div>
<div class="t" style="right:107px;top:232px">-9.872,40</div>
<div class="a" style="left:839px;top:247px;width:1px;height:19px;background:#b3bacd"></div>
<div class="a" style="left:939px;top:247px;width:1px;height:19px;background:#b3bacd"></div>
<div class="a" style="left:840px;top:265px;width:276px;height:1px;background:#b3bacd"></div>
<div class="tri-d" style="left:846px;top:254px;border-top-width:6px;border-left-width:4px;border-right-width:4px"></div>
<div class="t" style="left:859px;top:251px;transform:scaleX(0.981);transform-origin:left center">24260</div>
<div class="t" style="left:945px;top:251px;transform:scaleX(0.973);transform-origin:left center">Doprinos za zapošljavanje na pl...</div>
<div class="a" style="left:1116px;top:247px;width:100px;height:19px;background:#fff;border-right:1px solid #d4d8e4;border-bottom:1px solid #d4d8e4"></div>
<div class="t" style="right:707px;top:251px">-6.500,18</div>
<div class="a" style="left:1216px;top:247px;width:100px;height:19px;background:#fff;border-right:1px solid #d4d8e4;border-bottom:1px solid #d4d8e4"></div>
<div class="t" style="right:607px;top:251px">-5.407,19</div>
<div class="a" style="left:1316px;top:247px;width:100px;height:19px;background:#fff;border-right:1px solid #d4d8e4;border-bottom:1px solid #d4d8e4"></div>
<div class="t" style="right:507px;top:251px">-5.061,16</div>
<div class="a" style="left:1416px;top:247px;width:100px;height:19px;background:#fff;border-right:1px solid #d4d8e4;border-bottom:1px solid #d4d8e4"></div>
<div class="t" style="right:407px;top:251px">-5.982,85</div>
<div class="a" style="left:1516px;top:247px;width:100px;height:19px;background:#fff;border-right:1px solid #d4d8e4;border-bottom:1px solid #d4d8e4"></div>
<div class="t" style="right:307px;top:251px">-5.155,40</div>
<div class="a" style="left:1616px;top:247px;width:100px;height:19px;background:#fff;border-right:1px solid #d4d8e4;border-bottom:1px solid #d4d8e4"></div>
<div class="t" style="right:207px;top:251px">-5.459,34</div>
<div class="a" style="left:1716px;top:247px;width:100px;height:19px;background:#e8eef9;border-right:1px solid #d4d8e4;border-bottom:1px solid #d4d8e4"></div>
<div class="t" style="right:107px;top:251px">-33.566,12</div>
<div class="a" style="left:839px;top:266px;width:1px;height:19px;background:#b3bacd"></div>
<div class="a" style="left:939px;top:266px;width:1px;height:19px;background:#b3bacd"></div>
<div class="a" style="left:840px;top:284px;width:276px;height:1px;background:#b3bacd"></div>
<div class="tri-d" style="left:846px;top:273px;border-top-width:6px;border-left-width:4px;border-right-width:4px"></div>
<div class="t" style="left:859px;top:270px;transform:scaleX(0.981);transform-origin:left center">24300</div>
<div class="t" style="left:945px;top:270px;transform:scaleX(0.894);transform-origin:left center">OBVEZE ZA POREZ NA DOBIT</div>
<div class="a" style="left:1116px;top:266px;width:100px;height:19px;background:#fff;border-right:1px solid #d4d8e4;border-bottom:1px solid #d4d8e4"></div>
<div class="t" style="right:707px;top:270px">-55.836,61</div>
<div class="a" style="left:1216px;top:266px;width:100px;height:19px;background:#fff;border-right:1px solid #d4d8e4;border-bottom:1px solid #d4d8e4"></div>
<div class="t" style="right:607px;top:270px">-55.836,61</div>
<div class="a" style="left:1316px;top:266px;width:100px;height:19px;background:#fff;border-right:1px solid #d4d8e4;border-bottom:1px solid #d4d8e4"></div>
<div class="t" style="right:507px;top:270px">-55.836,61</div>
<div class="a" style="left:1416px;top:266px;width:100px;height:19px;background:#fff;border-right:1px solid #d4d8e4;border-bottom:1px solid #d4d8e4"></div>
<div class="t" style="right:407px;top:270px">-55.836,61</div>
<div class="a" style="left:1516px;top:266px;width:100px;height:19px;background:#fff;border-right:1px solid #d4d8e4;border-bottom:1px solid #d4d8e4"></div>
<div class="a" style="left:1616px;top:266px;width:100px;height:19px;background:#fff;border-right:1px solid #d4d8e4;border-bottom:1px solid #d4d8e4"></div>
<div class="a" style="left:1716px;top:266px;width:100px;height:19px;background:#e8eef9;border-right:1px solid #d4d8e4;border-bottom:1px solid #d4d8e4"></div>
<div class="t" style="right:107px;top:270px;transform:scaleX(0.988);transform-origin:right center">-223.346,44</div>
<div class="a" style="left:839px;top:285px;width:1px;height:19px;background:#b3bacd"></div>
<div class="a" style="left:939px;top:285px;width:1px;height:19px;background:#b3bacd"></div>
<div class="a" style="left:840px;top:303px;width:276px;height:1px;background:#b3bacd"></div>
<div class="tri-d" style="left:846px;top:292px;border-top-width:6px;border-left-width:4px;border-right-width:4px"></div>
<div class="t" style="left:859px;top:289px;transform:scaleX(0.981);transform-origin:left center">24500</div>
<div class="t" style="left:945px;top:289px;transform:scaleX(0.910);transform-origin:left center">OBAVEZE ZA ČLANARINU TURI...</div>
<div class="a" style="left:1116px;top:285px;width:100px;height:19px;background:#fff;border-right:1px solid #d4d8e4;border-bottom:1px solid #d4d8e4"></div>
<div class="a" style="left:1216px;top:285px;width:100px;height:19px;background:#fff;border-right:1px solid #d4d8e4;border-bottom:1px solid #d4d8e4"></div>
<div class="a" style="left:1316px;top:285px;width:100px;height:19px;background:#fff;border-right:1px solid #d4d8e4;border-bottom:1px solid #d4d8e4"></div>
<div class="a" style="left:1416px;top:285px;width:100px;height:19px;background:#fff;border-right:1px solid #d4d8e4;border-bottom:1px solid #d4d8e4"></div>
<div class="a" style="left:1516px;top:285px;width:100px;height:19px;background:#fff;border-right:1px solid #d4d8e4;border-bottom:1px solid #d4d8e4"></div>
<div class="t" style="right:307px;top:289px">-765,39</div>
<div class="a" style="left:1616px;top:285px;width:100px;height:19px;background:#fff;border-right:1px solid #d4d8e4;border-bottom:1px solid #d4d8e4"></div>
<div class="a" style="left:1716px;top:285px;width:100px;height:19px;background:#e8eef9;border-right:1px solid #d4d8e4;border-bottom:1px solid #d4d8e4"></div>
<div class="t" style="right:107px;top:289px">-765,39</div>
<div class="a" style="left:839px;top:304px;width:1px;height:19px;background:#b3bacd"></div>
<div class="a" style="left:939px;top:304px;width:1px;height:19px;background:#b3bacd"></div>
<div class="a" style="left:840px;top:322px;width:276px;height:1px;background:#b3bacd"></div>
<div class="tri-d" style="left:846px;top:311px;border-top-width:6px;border-left-width:4px;border-right-width:4px"></div>
<div class="t" style="left:859px;top:308px;transform:scaleX(0.981);transform-origin:left center">24730</div>
<div class="t" style="left:945px;top:308px;transform:scaleX(0.973);transform-origin:left center">Ostale obveze prema carini (za ...</div>
<div class="a" style="left:1116px;top:304px;width:100px;height:19px;background:#fff;border-right:1px solid #d4d8e4;border-bottom:1px solid #d4d8e4"></div>
<div class="t" style="right:707px;top:308px">-24.192,55</div>
<div class="a" style="left:1216px;top:304px;width:100px;height:19px;background:#fff;border-right:1px solid #d4d8e4;border-bottom:1px solid #d4d8e4"></div>
<div class="t" style="right:607px;top:308px">-46.327,03</div>
<div class="a" style="left:1316px;top:304px;width:100px;height:19px;background:#fff;border-right:1px solid #d4d8e4;border-bottom:1px solid #d4d8e4"></div>
<div class="t" style="right:507px;top:308px">-59.842,36</div>
<div class="a" style="left:1416px;top:304px;width:100px;height:19px;background:#fff;border-right:1px solid #d4d8e4;border-bottom:1px solid #d4d8e4"></div>
<div class="t" style="right:407px;top:308px">-39.266,08</div>
<div class="a" style="left:1516px;top:304px;width:100px;height:19px;background:#fff;border-right:1px solid #d4d8e4;border-bottom:1px solid #d4d8e4"></div>
<div class="t" style="right:307px;top:308px">-75.059,23</div>
<div class="a" style="left:1616px;top:304px;width:100px;height:19px;background:#fff;border-right:1px solid #d4d8e4;border-bottom:1px solid #d4d8e4"></div>
<div class="t" style="right:207px;top:308px">-36.145,22</div>
<div class="a" style="left:1716px;top:304px;width:100px;height:19px;background:#e8eef9;border-right:1px solid #d4d8e4;border-bottom:1px solid #d4d8e4"></div>
<div class="t" style="right:107px;top:308px;transform:scaleX(0.988);transform-origin:right center">-280.832,47</div>
<div class="a" style="left:839px;top:323px;width:1px;height:19px;background:#b3bacd"></div>
<div class="a" style="left:939px;top:323px;width:1px;height:19px;background:#b3bacd"></div>
<div class="a" style="left:840px;top:341px;width:276px;height:1px;background:#b3bacd"></div>
<div class="tri-d" style="left:846px;top:330px;border-top-width:6px;border-left-width:4px;border-right-width:4px"></div>
<div class="t" style="left:859px;top:327px;transform:scaleX(0.981);transform-origin:left center">24900</div>
<div class="t" style="left:945px;top:327px;transform:scaleX(0.963);transform-origin:left center">Obveze za nadoknadu za šume</div>
<div class="a" style="left:1116px;top:323px;width:100px;height:19px;background:#fff;border-right:1px solid #d4d8e4;border-bottom:1px solid #d4d8e4"></div>
<div class="a" style="left:1216px;top:323px;width:100px;height:19px;background:#fff;border-right:1px solid #d4d8e4;border-bottom:1px solid #d4d8e4"></div>
<div class="a" style="left:1316px;top:323px;width:100px;height:19px;background:#fff;border-right:1px solid #d4d8e4;border-bottom:1px solid #d4d8e4"></div>
<div class="t" style="right:507px;top:327px">-18.540,12</div>
<div class="a" style="left:1416px;top:323px;width:100px;height:19px;background:#fff;border-right:1px solid #d4d8e4;border-bottom:1px solid #d4d8e4"></div>
<div class="t" style="right:407px;top:327px">-17.815,22</div>
<div class="a" style="left:1516px;top:323px;width:100px;height:19px;background:#fff;border-right:1px solid #d4d8e4;border-bottom:1px solid #d4d8e4"></div>
<div class="a" style="left:1616px;top:323px;width:100px;height:19px;background:#fff;border-right:1px solid #d4d8e4;border-bottom:1px solid #d4d8e4"></div>
<div class="a" style="left:1716px;top:323px;width:100px;height:19px;background:#e8eef9;border-right:1px solid #d4d8e4;border-bottom:1px solid #d4d8e4"></div>
<div class="t" style="right:107px;top:327px">-36.355,34</div>
<div class="a" style="left:839px;top:342px;width:1px;height:19px;background:#b3bacd"></div>
<div class="a" style="left:939px;top:342px;width:1px;height:19px;background:#b3bacd"></div>
<div class="a" style="left:840px;top:360px;width:276px;height:1px;background:#b3bacd"></div>
<div class="tri-d" style="left:846px;top:349px;border-top-width:6px;border-left-width:4px;border-right-width:4px"></div>
<div class="t" style="left:859px;top:346px;transform:scaleX(0.981);transform-origin:left center">46500</div>
<div class="t" style="left:945px;top:346px;transform:scaleX(0.983);transform-origin:left center">Troškovi platnog prometa</div>
<div class="a" style="left:1116px;top:342px;width:100px;height:19px;background:#fff;border-right:1px solid #d4d8e4;border-bottom:1px solid #d4d8e4"></div>
<div class="t" style="right:707px;top:346px">-1.865,07</div>
<div class="a" style="left:1216px;top:342px;width:100px;height:19px;background:#fff;border-right:1px solid #d4d8e4;border-bottom:1px solid #d4d8e4"></div>
<div class="t" style="right:607px;top:346px">-1.385,12</div>
<div class="a" style="left:1316px;top:342px;width:100px;height:19px;background:#fff;border-right:1px solid #d4d8e4;border-bottom:1px solid #d4d8e4"></div>
<div class="t" style="right:507px;top:346px">-1.609,84</div>
<div class="a" style="left:1416px;top:342px;width:100px;height:19px;background:#fff;border-right:1px solid #d4d8e4;border-bottom:1px solid #d4d8e4"></div>
<div class="t" style="right:407px;top:346px">-2.082,94</div>
<div class="a" style="left:1516px;top:342px;width:100px;height:19px;background:#fff;border-right:1px solid #d4d8e4;border-bottom:1px solid #d4d8e4"></div>
<div class="t" style="right:307px;top:346px">-1.912,81</div>
<div class="a" style="left:1616px;top:342px;width:100px;height:19px;background:#fff;border-right:1px solid #d4d8e4;border-bottom:1px solid #d4d8e4"></div>
<div class="t" style="right:207px;top:346px">-217,50</div>
<div class="a" style="left:1716px;top:342px;width:100px;height:19px;background:#e8eef9;border-right:1px solid #d4d8e4;border-bottom:1px solid #d4d8e4"></div>
<div class="t" style="right:107px;top:346px">-9.073,28</div>
<div class="a" style="left:839px;top:361px;width:1px;height:19px;background:#b3bacd"></div>
<div class="a" style="left:939px;top:361px;width:1px;height:19px;background:#b3bacd"></div>
<div class="a" style="left:840px;top:379px;width:276px;height:1px;background:#b3bacd"></div>
<div class="tri-d" style="left:846px;top:368px;border-top-width:6px;border-left-width:4px;border-right-width:4px"></div>
<div class="t" style="left:859px;top:365px;transform:scaleX(0.981);transform-origin:left center">46520</div>
<div class="t" style="left:945px;top:365px;transform:scaleX(0.956);transform-origin:left center">Bankovne usluge (za inozemni pl...</div>
<div class="a" style="left:1116px;top:361px;width:100px;height:19px;background:#fff;border-right:1px solid #d4d8e4;border-bottom:1px solid #d4d8e4"></div>
<div class="t" style="right:707px;top:365px">-1.240,05</div>
<div class="a" style="left:1216px;top:361px;width:100px;height:19px;background:#fff;border-right:1px solid #d4d8e4;border-bottom:1px solid #d4d8e4"></div>
<div class="t" style="right:607px;top:365px">-1.289,98</div>
<div class="a" style="left:1316px;top:361px;width:100px;height:19px;background:#fff;border-right:1px solid #d4d8e4;border-bottom:1px solid #d4d8e4"></div>
<div class="t" style="right:507px;top:365px">-1.011,38</div>
<div class="a" style="left:1416px;top:361px;width:100px;height:19px;background:#fff;border-right:1px solid #d4d8e4;border-bottom:1px solid #d4d8e4"></div>
<div class="t" style="right:407px;top:365px">-570,77</div>
<div class="a" style="left:1516px;top:361px;width:100px;height:19px;background:#fff;border-right:1px solid #d4d8e4;border-bottom:1px solid #d4d8e4"></div>
<div class="t" style="right:307px;top:365px">-472,77</div>
<div class="a" style="left:1616px;top:361px;width:100px;height:19px;background:#fff;border-right:1px solid #d4d8e4;border-bottom:1px solid #d4d8e4"></div>
<div class="t" style="right:207px;top:365px">-1.502,84</div>
<div class="a" style="left:1716px;top:361px;width:100px;height:19px;background:#e8eef9;border-right:1px solid #d4d8e4;border-bottom:1px solid #d4d8e4"></div>
<div class="t" style="right:107px;top:365px">-6.087,79</div>
<div class="a" style="left:839px;top:380px;width:1px;height:19px;background:#b3bacd"></div>
<div class="a" style="left:939px;top:380px;width:1px;height:19px;background:#b3bacd"></div>
<div class="a" style="left:840px;top:398px;width:276px;height:1px;background:#b3bacd"></div>
<div class="tri-d" style="left:846px;top:387px;border-top-width:6px;border-left-width:4px;border-right-width:4px"></div>
<div class="t" style="left:859px;top:384px;transform:scaleX(0.981);transform-origin:left center">46521</div>
<div class="t" style="left:945px;top:384px;transform:scaleX(0.893);transform-origin:left center">BANKOVNE USLUGE-BONITET I ...</div>
<div class="a" style="left:1116px;top:380px;width:100px;height:19px;background:#fff;border-right:1px solid #d4d8e4;border-bottom:1px solid #d4d8e4"></div>
<div class="a" style="left:1216px;top:380px;width:100px;height:19px;background:#fff;border-right:1px solid #d4d8e4;border-bottom:1px solid #d4d8e4"></div>
<div class="a" style="left:1316px;top:380px;width:100px;height:19px;background:#fff;border-right:1px solid #d4d8e4;border-bottom:1px solid #d4d8e4"></div>
<div class="a" style="left:1416px;top:380px;width:100px;height:19px;background:#fff;border-right:1px solid #d4d8e4;border-bottom:1px solid #d4d8e4"></div>
<div class="a" style="left:1516px;top:380px;width:100px;height:19px;background:#fff;border-right:1px solid #d4d8e4;border-bottom:1px solid #d4d8e4"></div>
<div class="a" style="left:1616px;top:380px;width:100px;height:19px;background:#fff;border-right:1px solid #d4d8e4;border-bottom:1px solid #d4d8e4"></div>
<div class="t" style="right:207px;top:384px">-2.750,00</div>
<div class="a" style="left:1716px;top:380px;width:100px;height:19px;background:#e8eef9;border-right:1px solid #d4d8e4;border-bottom:1px solid #d4d8e4"></div>
<div class="t" style="right:107px;top:384px">-2.750,00</div>
<div class="a" style="left:839px;top:399px;width:1px;height:19px;background:#b3bacd"></div>
<div class="a" style="left:939px;top:399px;width:1px;height:19px;background:#b3bacd"></div>
<div class="a" style="left:840px;top:417px;width:276px;height:1px;background:#b3bacd"></div>
<div class="tri-d" style="left:846px;top:406px;border-top-width:6px;border-left-width:4px;border-right-width:4px"></div>
<div class="t" style="left:859px;top:403px;transform:scaleX(0.981);transform-origin:left center">46600</div>
<div class="t" style="left:945px;top:403px;transform:scaleX(0.928);transform-origin:left center">Članarine komori (HGK ili HOK) i ...</div>
<div class="a" style="left:1116px;top:399px;width:100px;height:19px;background:#fff;border-right:1px solid #d4d8e4;border-bottom:1px solid #d4d8e4"></div>
<div class="t" style="right:707px;top:403px">-1.637,47</div>
<div class="a" style="left:1216px;top:399px;width:100px;height:19px;background:#fff;border-right:1px solid #d4d8e4;border-bottom:1px solid #d4d8e4"></div>
<div class="t" style="right:607px;top:403px">-1.637,47</div>
<div class="a" style="left:1316px;top:399px;width:100px;height:19px;background:#fff;border-right:1px solid #d4d8e4;border-bottom:1px solid #d4d8e4"></div>
<div class="t" style="right:507px;top:403px">-1.637,36</div>
<div class="a" style="left:1416px;top:399px;width:100px;height:19px;background:#fff;border-right:1px solid #d4d8e4;border-bottom:1px solid #d4d8e4"></div>
<div class="t" style="right:407px;top:403px">-1.637,36</div>
<div class="a" style="left:1516px;top:399px;width:100px;height:19px;background:#fff;border-right:1px solid #d4d8e4;border-bottom:1px solid #d4d8e4"></div>
<div class="t" style="right:307px;top:403px">-1.637,36</div>
<div class="a" style="left:1616px;top:399px;width:100px;height:19px;background:#fff;border-right:1px solid #d4d8e4;border-bottom:1px solid #d4d8e4"></div>
<div class="t" style="right:207px;top:403px">-1.637,36</div>
<div class="a" style="left:1716px;top:399px;width:100px;height:19px;background:#e8eef9;border-right:1px solid #d4d8e4;border-bottom:1px solid #d4d8e4"></div>
<div class="t" style="right:107px;top:403px">-9.824,38</div>
<div class="a" style="left:839px;top:418px;width:1px;height:19px;background:#b3bacd"></div>
<div class="a" style="left:939px;top:418px;width:1px;height:19px;background:#b3bacd"></div>
<div class="a" style="left:840px;top:436px;width:276px;height:1px;background:#b3bacd"></div>
<div class="tri-d" style="left:846px;top:425px;border-top-width:6px;border-left-width:4px;border-right-width:4px"></div>
<div class="t" style="left:859px;top:422px;transform:scaleX(0.981);transform-origin:left center">46620</div>
<div class="t" style="left:945px;top:422px;transform:scaleX(0.968);transform-origin:left center">Nadoknada za općekorisnu funk...</div>
<div class="a" style="left:1116px;top:418px;width:100px;height:19px;background:#fff;border-right:1px solid #d4d8e4;border-bottom:1px solid #d4d8e4"></div>
<div class="a" style="left:1216px;top:418px;width:100px;height:19px;background:#fff;border-right:1px solid #d4d8e4;border-bottom:1px solid #d4d8e4"></div>
<div class="a" style="left:1316px;top:418px;width:100px;height:19px;background:#fff;border-right:1px solid #d4d8e4;border-bottom:1px solid #d4d8e4"></div>
<div class="a" style="left:1416px;top:418px;width:100px;height:19px;background:#fff;border-right:1px solid #d4d8e4;border-bottom:1px solid #d4d8e4"></div>
<div class="a" style="left:1516px;top:418px;width:100px;height:19px;background:#fff;border-right:1px solid #d4d8e4;border-bottom:1px solid #d4d8e4"></div>
<div class="a" style="left:1616px;top:418px;width:100px;height:19px;background:#fff;border-right:1px solid #d4d8e4;border-bottom:1px solid #d4d8e4"></div>
<div class="t" style="right:207px;top:422px">-7.635,10</div>
<div class="a" style="left:1716px;top:418px;width:100px;height:19px;background:#e8eef9;border-right:1px solid #d4d8e4;border-bottom:1px solid #d4d8e4"></div>
<div class="t" style="right:107px;top:422px">-7.635,10</div>
<div class="a" style="left:839px;top:437px;width:1px;height:19px;background:#b3bacd"></div>
<div class="a" style="left:939px;top:437px;width:1px;height:19px;background:#b3bacd"></div>
<div class="a" style="left:840px;top:455px;width:276px;height:1px;background:#b3bacd"></div>
<div class="tri-d" style="left:846px;top:444px;border-top-width:6px;border-left-width:4px;border-right-width:4px"></div>
<div class="t" style="left:859px;top:441px;transform:scaleX(0.981);transform-origin:left center">46630</div>
<div class="t" style="left:945px;top:441px;transform:scaleX(0.973);transform-origin:left center">Članarina turističkoj zajednici</div>
<div class="a" style="left:1116px;top:437px;width:100px;height:19px;background:#fff;border-right:1px solid #d4d8e4;border-bottom:1px solid #d4d8e4"></div>
<div class="t" style="right:707px;top:441px">-735,87</div>
<div class="a" style="left:1216px;top:437px;width:100px;height:19px;background:#fff;border-right:1px solid #d4d8e4;border-bottom:1px solid #d4d8e4"></div>
<div class="t" style="right:607px;top:441px">-735,87</div>
<div class="a" style="left:1316px;top:437px;width:100px;height:19px;background:#fff;border-right:1px solid #d4d8e4;border-bottom:1px solid #d4d8e4"></div>
<div class="t" style="right:507px;top:441px">-735,87</div>
<div class="a" style="left:1416px;top:437px;width:100px;height:19px;background:#fff;border-right:1px solid #d4d8e4;border-bottom:1px solid #d4d8e4"></div>
<div class="t" style="right:407px;top:441px">-799,80</div>
<div class="a" style="left:1516px;top:437px;width:100px;height:19px;background:#fff;border-right:1px solid #d4d8e4;border-bottom:1px solid #d4d8e4"></div>
<div class="t" style="right:307px;top:441px">-799,80</div>
<div class="a" style="left:1616px;top:437px;width:100px;height:19px;background:#fff;border-right:1px solid #d4d8e4;border-bottom:1px solid #d4d8e4"></div>
<div class="t" style="right:207px;top:441px">-799,80</div>
<div class="a" style="left:1716px;top:437px;width:100px;height:19px;background:#e8eef9;border-right:1px solid #d4d8e4;border-bottom:1px solid #d4d8e4"></div>
<div class="t" style="right:107px;top:441px">-4.607,01</div>
<div class="a" style="left:839px;top:456px;width:1px;height:19px;background:#b3bacd"></div>
<div class="a" style="left:939px;top:456px;width:1px;height:19px;background:#b3bacd"></div>
<div class="a" style="left:840px;top:474px;width:276px;height:1px;background:#b3bacd"></div>
<div class="tri-d" style="left:846px;top:463px;border-top-width:6px;border-left-width:4px;border-right-width:4px"></div>
<div class="t" style="left:859px;top:460px;transform:scaleX(0.981);transform-origin:left center">46680</div>
<div class="t" style="left:945px;top:460px;transform:scaleX(0.888);transform-origin:left center">SPOMENIČKA RENTA</div>
<div class="a" style="left:1116px;top:456px;width:100px;height:19px;background:#fff;border-right:1px solid #d4d8e4;border-bottom:1px solid #d4d8e4"></div>
<div class="a" style="left:1216px;top:456px;width:100px;height:19px;background:#fff;border-right:1px solid #d4d8e4;border-bottom:1px solid #d4d8e4"></div>
<div class="a" style="left:1316px;top:456px;width:100px;height:19px;background:#fff;border-right:1px solid #d4d8e4;border-bottom:1px solid #d4d8e4"></div>
<div class="a" style="left:1416px;top:456px;width:100px;height:19px;background:#fff;border-right:1px solid #d4d8e4;border-bottom:1px solid #d4d8e4"></div>
<div class="a" style="left:1516px;top:456px;width:100px;height:19px;background:#fff;border-right:1px solid #d4d8e4;border-bottom:1px solid #d4d8e4"></div>
<div class="a" style="left:1616px;top:456px;width:100px;height:19px;background:#fff;border-right:1px solid #d4d8e4;border-bottom:1px solid #d4d8e4"></div>
<div class="t" style="right:207px;top:460px">-1.784,81</div>
<div class="a" style="left:1716px;top:456px;width:100px;height:19px;background:#e8eef9;border-right:1px solid #d4d8e4;border-bottom:1px solid #d4d8e4"></div>
<div class="t" style="right:107px;top:460px">-1.784,81</div>
<div class="a" style="left:839px;top:475px;width:1px;height:19px;background:#b3bacd"></div>
<div class="a" style="left:939px;top:475px;width:1px;height:19px;background:#b3bacd"></div>
<div class="a" style="left:840px;top:493px;width:276px;height:1px;background:#b3bacd"></div>
<div class="tri-d" style="left:846px;top:482px;border-top-width:6px;border-left-width:4px;border-right-width:4px"></div>
<div class="t" style="left:859px;top:479px;transform:scaleX(0.981);transform-origin:left center">46731</div>
<div class="t" style="left:945px;top:479px;transform:scaleX(0.901);transform-origin:left center">NAKNADA ZA ZBRINJAVANJE O...</div>
<div class="a" style="left:1116px;top:475px;width:100px;height:19px;background:#fff;border-right:1px solid #d4d8e4;border-bottom:1px solid #d4d8e4"></div>
<div class="a" style="left:1216px;top:475px;width:100px;height:19px;background:#fff;border-right:1px solid #d4d8e4;border-bottom:1px solid #d4d8e4"></div>
<div class="t" style="right:607px;top:479px">-880,00</div>
<div class="a" style="left:1316px;top:475px;width:100px;height:19px;background:#fff;border-right:1px solid #d4d8e4;border-bottom:1px solid #d4d8e4"></div>
<div class="a" style="left:1416px;top:475px;width:100px;height:19px;background:#fff;border-right:1px solid #d4d8e4;border-bottom:1px solid #d4d8e4"></div>
<div class="a" style="left:1516px;top:475px;width:100px;height:19px;background:#fff;border-right:1px solid #d4d8e4;border-bottom:1px solid #d4d8e4"></div>
<div class="t" style="right:307px;top:479px">-255,00</div>
<div class="a" style="left:1616px;top:475px;width:100px;height:19px;background:#fff;border-right:1px solid #d4d8e4;border-bottom:1px solid #d4d8e4"></div>
<div class="a" style="left:1716px;top:475px;width:100px;height:19px;background:#e8eef9;border-right:1px solid #d4d8e4;border-bottom:1px solid #d4d8e4"></div>
<div class="t" style="right:107px;top:479px">-1.135,00</div>
<div class="a" style="left:839px;top:494px;width:1px;height:19px;background:#b3bacd"></div>
<div class="a" style="left:939px;top:494px;width:1px;height:19px;background:#b3bacd"></div>
<div class="a" style="left:840px;top:512px;width:276px;height:1px;background:#b3bacd"></div>
<div class="tri-d" style="left:846px;top:501px;border-top-width:6px;border-left-width:4px;border-right-width:4px"></div>
<div class="t" style="left:859px;top:498px;transform:scaleX(0.981);transform-origin:left center">46930</div>
<div class="t" style="left:945px;top:498px;transform:scaleX(0.975);transform-origin:left center">Sudski troškovi i pristojbe</div>
<div class="a" style="left:1116px;top:494px;width:100px;height:19px;background:#fff;border-right:1px solid #d4d8e4;border-bottom:1px solid #d4d8e4"></div>
<div class="a" style="left:1216px;top:494px;width:100px;height:19px;background:#fff;border-right:1px solid #d4d8e4;border-bottom:1px solid #d4d8e4"></div>
<div class="a" style="left:1316px;top:494px;width:100px;height:19px;background:#fff;border-right:1px solid #d4d8e4;border-bottom:1px solid #d4d8e4"></div>
<div class="a" style="left:1416px;top:494px;width:100px;height:19px;background:#fff;border-right:1px solid #d4d8e4;border-bottom:1px solid #d4d8e4"></div>
<div class="t" style="right:407px;top:498px">-1.000,00</div>
<div class="a" style="left:1516px;top:494px;width:100px;height:19px;background:#fff;border-right:1px solid #d4d8e4;border-bottom:1px solid #d4d8e4"></div>
<div class="a" style="left:1616px;top:494px;width:100px;height:19px;background:#fff;border-right:1px solid #d4d8e4;border-bottom:1px solid #d4d8e4"></div>
<div class="a" style="left:1716px;top:494px;width:100px;height:19px;background:#e8eef9;border-right:1px solid #d4d8e4;border-bottom:1px solid #d4d8e4"></div>
<div class="t" style="right:107px;top:498px">-1.000,00</div>
<div class="a" style="left:839px;top:513px;width:1px;height:19px;background:#b3bacd"></div>
<div class="a" style="left:939px;top:513px;width:1px;height:19px;background:#b3bacd"></div>
<div class="a" style="left:840px;top:531px;width:276px;height:1px;background:#b3bacd"></div>
<div class="tri-d" style="left:846px;top:520px;border-top-width:6px;border-left-width:4px;border-right-width:4px"></div>
<div class="t" style="left:859px;top:517px;transform:scaleX(0.981);transform-origin:left center">48600</div>
<div class="t" style="left:945px;top:517px;transform:scaleX(0.974);transform-origin:left center">Darovanje za općekorisne namj...</div>
<div class="a" style="left:1116px;top:513px;width:100px;height:19px;background:#fff;border-right:1px solid #d4d8e4;border-bottom:1px solid #d4d8e4"></div>
<div class="a" style="left:1216px;top:513px;width:100px;height:19px;background:#fff;border-right:1px solid #d4d8e4;border-bottom:1px solid #d4d8e4"></div>
<div class="t" style="right:607px;top:517px">-2.000,00</div>
<div class="a" style="left:1316px;top:513px;width:100px;height:19px;background:#fff;border-right:1px solid #d4d8e4;border-bottom:1px solid #d4d8e4"></div>
<div class="a" style="left:1416px;top:513px;width:100px;height:19px;background:#fff;border-right:1px solid #d4d8e4;border-bottom:1px solid #d4d8e4"></div>
<div class="a" style="left:1516px;top:513px;width:100px;height:19px;background:#fff;border-right:1px solid #d4d8e4;border-bottom:1px solid #d4d8e4"></div>
<div class="a" style="left:1616px;top:513px;width:100px;height:19px;background:#fff;border-right:1px solid #d4d8e4;border-bottom:1px solid #d4d8e4"></div>
<div class="t" style="right:207px;top:517px">-5.800,00</div>
<div class="a" style="left:1716px;top:513px;width:100px;height:19px;background:#e8eef9;border-right:1px solid #d4d8e4;border-bottom:1px solid #d4d8e4"></div>
<div class="t" style="right:107px;top:517px">-7.800,00</div>
<div class="a" style="left:839px;top:532px;width:1px;height:19px;background:#b3bacd"></div>
<div class="a" style="left:939px;top:532px;width:1px;height:19px;background:#b3bacd"></div>
<div class="a" style="left:840px;top:550px;width:276px;height:1px;background:#b3bacd"></div>
<div class="tri-d" style="left:846px;top:539px;border-top-width:6px;border-left-width:4px;border-right-width:4px"></div>
<div class="t" style="left:859px;top:536px;transform:scaleX(0.981);transform-origin:left center">94000</div>
<div class="t" style="left:945px;top:536px;transform:scaleX(0.981);transform-origin:left center">Zadržani dobitci ostvareni do kr...</div>
<div class="a" style="left:1116px;top:532px;width:100px;height:19px;background:#fff;border-right:1px solid #d4d8e4;border-bottom:1px solid #d4d8e4"></div>
<div class="a" style="left:1216px;top:532px;width:100px;height:19px;background:#fff;border-right:1px solid #d4d8e4;border-bottom:1px solid #d4d8e4"></div>
<div class="a" style="left:1316px;top:532px;width:100px;height:19px;background:#fff;border-right:1px solid #d4d8e4;border-bottom:1px solid #d4d8e4"></div>
<div class="t" style="right:507px;top:536px;transform:scaleX(0.988);transform-origin:right center">-300.000,00</div>
<div class="a" style="left:1416px;top:532px;width:100px;height:19px;background:#fff;border-right:1px solid #d4d8e4;border-bottom:1px solid #d4d8e4"></div>
<div class="t" style="right:407px;top:536px;transform:scaleX(0.988);transform-origin:right center">-174.000,00</div>
<div class="a" style="left:1516px;top:532px;width:100px;height:19px;background:#fff;border-right:1px solid #d4d8e4;border-bottom:1px solid #d4d8e4"></div>
<div class="a" style="left:1616px;top:532px;width:100px;height:19px;background:#fff;border-right:1px solid #d4d8e4;border-bottom:1px solid #d4d8e4"></div>
<div class="a" style="left:1716px;top:532px;width:100px;height:19px;background:#e8eef9;border-right:1px solid #d4d8e4;border-bottom:1px solid #d4d8e4"></div>
<div class="t" style="right:107px;top:536px;transform:scaleX(0.988);transform-origin:right center">-474.000,00</div>
<div class="a" style="left:679px;top:550px;width:437px;height:1px;background:#b3bacd"></div>
<div class="a" style="left:679px;top:569px;width:437px;height:1px;background:#b3bacd"></div>
<div class="t" style="left:683px;top:555px;transform:scaleX(0.935);transform-origin:left center">ISPLATA DOMICILNA Total</div>
<div class="a" style="left:1116px;top:551px;width:100px;height:19px;background:#e8eef9;border-right:1px solid #d4d8e4;border-bottom:1px solid #d4d8e4"></div>
<div class="t" style="right:707px;top:555px;transform:scaleX(0.987);transform-origin:right center">-1.716.477,24</div>
<div class="a" style="left:1216px;top:551px;width:100px;height:19px;background:#e8eef9;border-right:1px solid #d4d8e4;border-bottom:1px solid #d4d8e4"></div>
<div class="t" style="right:607px;top:555px;transform:scaleX(0.987);transform-origin:right center">-1.914.811,42</div>
<div class="a" style="left:1316px;top:551px;width:100px;height:19px;background:#e8eef9;border-right:1px solid #d4d8e4;border-bottom:1px solid #d4d8e4"></div>
<div class="t" style="right:507px;top:555px;transform:scaleX(0.987);transform-origin:right center">-2.466.734,29</div>
<div class="a" style="left:1416px;top:551px;width:100px;height:19px;background:#e8eef9;border-right:1px solid #d4d8e4;border-bottom:1px solid #d4d8e4"></div>
<div class="t" style="right:407px;top:555px;transform:scaleX(0.987);transform-origin:right center">-2.584.846,23</div>
<div class="a" style="left:1516px;top:551px;width:100px;height:19px;background:#e8eef9;border-right:1px solid #d4d8e4;border-bottom:1px solid #d4d8e4"></div>
<div class="t" style="right:307px;top:555px;transform:scaleX(0.987);transform-origin:right center">-2.093.139,65</div>
<div class="a" style="left:1616px;top:551px;width:100px;height:19px;background:#e8eef9;border-right:1px solid #d4d8e4;border-bottom:1px solid #d4d8e4"></div>
<div class="t" style="right:207px;top:555px;transform:scaleX(0.987);transform-origin:right center">-2.590.056,33</div>
<div class="a" style="left:1716px;top:551px;width:100px;height:19px;background:#e8eef9;border-right:1px solid #d4d8e4;border-bottom:1px solid #d4d8e4"></div>
<div class="t" style="right:107px;top:555px;transform:scaleX(0.987);transform-origin:right center">-13.366.065,16</div>
<div class="tri-d" style="left:683px;top:577px;border-top-width:6px"></div>
<div class="t" style="left:696px;top:574px;transform:scaleX(0.916);transform-origin:left center">UPLATA DOMICILNA</div>
<div class="a" style="left:839px;top:570px;width:1px;height:19px;background:#b3bacd"></div>
<div class="a" style="left:939px;top:570px;width:1px;height:19px;background:#b3bacd"></div>
<div class="a" style="left:840px;top:588px;width:276px;height:1px;background:#b3bacd"></div>
<div class="tri-d" style="left:846px;top:577px;border-top-width:6px;border-left-width:4px;border-right-width:4px"></div>
<div class="t" style="left:859px;top:574px;transform:scaleX(0.981);transform-origin:left center">0650</div>
<div class="t" style="left:945px;top:574px;transform:scaleX(0.905);transform-origin:left center">POTRAŽIVANJA ZA DANE DUGO...</div>
<div class="a" style="left:1116px;top:570px;width:100px;height:19px;background:#fff;border-right:1px solid #d4d8e4;border-bottom:1px solid #d4d8e4"></div>
<div class="a" style="left:1216px;top:570px;width:100px;height:19px;background:#fff;border-right:1px solid #d4d8e4;border-bottom:1px solid #d4d8e4"></div>
<div class="a" style="left:1316px;top:570px;width:100px;height:19px;background:#fff;border-right:1px solid #d4d8e4;border-bottom:1px solid #d4d8e4"></div>
<div class="a" style="left:1416px;top:570px;width:100px;height:19px;background:#fff;border-right:1px solid #d4d8e4;border-bottom:1px solid #d4d8e4"></div>
<div class="t" style="right:407px;top:574px;transform:scaleX(0.981);transform-origin:right center">2.391,28</div>
<div class="a" style="left:1516px;top:570px;width:100px;height:19px;background:#fff;border-right:1px solid #d4d8e4;border-bottom:1px solid #d4d8e4"></div>
<div class="a" style="left:1616px;top:570px;width:100px;height:19px;background:#fff;border-right:1px solid #d4d8e4;border-bottom:1px solid #d4d8e4"></div>
<div class="a" style="left:1716px;top:570px;width:100px;height:19px;background:#e8eef9;border-right:1px solid #d4d8e4;border-bottom:1px solid #d4d8e4"></div>
<div class="t" style="right:107px;top:574px;transform:scaleX(0.981);transform-origin:right center">2.391,28</div>
<div class="a" style="left:839px;top:589px;width:1px;height:19px;background:#b3bacd"></div>
<div class="a" style="left:939px;top:589px;width:1px;height:19px;background:#b3bacd"></div>
<div class="a" style="left:840px;top:607px;width:276px;height:1px;background:#b3bacd"></div>
<div class="tri-d" style="left:846px;top:596px;border-top-width:6px;border-left-width:4px;border-right-width:4px"></div>
<div class="t" style="left:859px;top:593px;transform:scaleX(0.981);transform-origin:left center">0651</div>
<div class="t" style="left:945px;top:593px;transform:scaleX(0.909);transform-origin:left center">POTRAŽIVANJA ZA KAMATE NA...</div>
<div class="a" style="left:1116px;top:589px;width:100px;height:19px;background:#fff;border-right:1px solid #d4d8e4;border-bottom:1px solid #d4d8e4"></div>
<div class="a" style="left:1216px;top:589px;width:100px;height:19px;background:#fff;border-right:1px solid #d4d8e4;border-bottom:1px solid #d4d8e4"></div>
<div class="a" style="left:1316px;top:589px;width:100px;height:19px;background:#fff;border-right:1px solid #d4d8e4;border-bottom:1px solid #d4d8e4"></div>
<div class="a" style="left:1416px;top:589px;width:100px;height:19px;background:#fff;border-right:1px solid #d4d8e4;border-bottom:1px solid #d4d8e4"></div>
<div class="t" style="right:407px;top:593px;transform:scaleX(0.981);transform-origin:right center">1.503,86</div>
<div class="a" style="left:1516px;top:589px;width:100px;height:19px;background:#fff;border-right:1px solid #d4d8e4;border-bottom:1px solid #d4d8e4"></div>
<div class="a" style="left:1616px;top:589px;width:100px;height:19px;background:#fff;border-right:1px solid #d4d8e4;border-bottom:1px solid #d4d8e4"></div>
<div class="a" style="left:1716px;top:589px;width:100px;height:19px;background:#e8eef9;border-right:1px solid #d4d8e4;border-bottom:1px solid #d4d8e4"></div>
<div class="t" style="right:107px;top:593px;transform:scaleX(0.981);transform-origin:right center">1.503,86</div>
<div class="a" style="left:839px;top:608px;width:1px;height:19px;background:#b3bacd"></div>
<div class="a" style="left:939px;top:608px;width:1px;height:19px;background:#b3bacd"></div>
<div class="a" style="left:840px;top:626px;width:276px;height:1px;background:#b3bacd"></div>
<div class="tri-d" style="left:846px;top:615px;border-top-width:6px;border-left-width:4px;border-right-width:4px"></div>
<div class="t" style="left:859px;top:612px;transform:scaleX(0.981);transform-origin:left center">10090</div>
<div class="t" style="left:945px;top:612px;transform:scaleX(0.980);transform-origin:left center">Žiro-račun prijelazni konto</div>
<div class="a" style="left:1116px;top:608px;width:100px;height:19px;background:#dfe7f8;border-right:1px solid #d4d8e4;border-bottom:1px solid #d4d8e4"></div>
<div class="t" style="right:707px;top:612px;transform:scaleX(0.981);transform-origin:right center">297.278,16</div>
<div class="a" style="left:1216px;top:608px;width:100px;height:19px;background:#dfe7f8;border-right:1px solid #d4d8e4;border-bottom:1px solid #d4d8e4"></div>
<div class="t" style="right:607px;top:612px;transform:scaleX(0.981);transform-origin:right center">480.994,13</div>
<div class="a" style="left:1316px;top:608px;width:100px;height:19px;background:#dfe7f8;border-right:1px solid #d4d8e4;border-bottom:1px solid #d4d8e4"></div>
<div class="t" style="right:507px;top:612px;transform:scaleX(0.981);transform-origin:right center">529.041,82</div>
<div class="a" style="left:1416px;top:608px;width:100px;height:19px;background:#dfe7f8;border-right:1px solid #d4d8e4;border-bottom:1px solid #d4d8e4"></div>
<div class="t" style="right:407px;top:612px;transform:scaleX(0.981);transform-origin:right center">499.980,59</div>
<div class="a" style="left:1516px;top:608px;width:100px;height:19px;background:#dfe7f8;border-right:1px solid #d4d8e4;border-bottom:1px solid #d4d8e4"></div>
<div class="t" style="right:307px;top:612px;transform:scaleX(0.981);transform-origin:right center">473.230,87</div>
<div class="a" style="left:1616px;top:608px;width:100px;height:19px;background:#dfe7f8;border-right:1px solid #d4d8e4;border-bottom:1px solid #d4d8e4"></div>
<div class="t" style="right:207px;top:612px;transform:scaleX(0.981);transform-origin:right center">793.292,29</div>
<div class="a" style="left:1716px;top:608px;width:100px;height:19px;background:#dfe7f8;border-right:1px solid #d4d8e4;border-bottom:1px solid #d4d8e4"></div>
<div class="t" style="right:107px;top:612px;transform:scaleX(0.981);transform-origin:right center">3.073.817,86</div>
<div class="a" style="left:839px;top:627px;width:1px;height:19px;background:#b3bacd"></div>
<div class="a" style="left:939px;top:627px;width:1px;height:19px;background:#b3bacd"></div>
<div class="a" style="left:840px;top:645px;width:276px;height:1px;background:#b3bacd"></div>
<div class="tri-d" style="left:846px;top:634px;border-top-width:6px;border-left-width:4px;border-right-width:4px"></div>
<div class="t" style="left:859px;top:631px;transform:scaleX(0.981);transform-origin:left center">12000</div>
<div class="t" style="left:945px;top:631px;transform:scaleX(0.983);transform-origin:left center">Potraživanja od kupaca dobara</div>
<div class="a" style="left:1116px;top:627px;width:100px;height:19px;background:#dfe7f8;border-right:1px solid #d4d8e4;border-bottom:1px solid #d4d8e4"></div>
<div class="t" style="right:707px;top:631px;transform:scaleX(0.981);transform-origin:right center">1.461.353,04</div>
<div class="a" style="left:1216px;top:627px;width:100px;height:19px;background:#dfe7f8;border-right:1px solid #d4d8e4;border-bottom:1px solid #d4d8e4"></div>
<div class="t" style="right:607px;top:631px;transform:scaleX(0.981);transform-origin:right center">1.475.993,83</div>
<div class="a" style="left:1316px;top:627px;width:100px;height:19px;background:#dfe7f8;border-right:1px solid #d4d8e4;border-bottom:1px solid #d4d8e4"></div>
<div class="t" style="right:507px;top:631px;transform:scaleX(0.981);transform-origin:right center">1.745.683,52</div>
<div class="a" style="left:1416px;top:627px;width:100px;height:19px;background:#dfe7f8;border-right:1px solid #d4d8e4;border-bottom:1px solid #d4d8e4"></div>
<div class="t" style="right:407px;top:631px;transform:scaleX(0.981);transform-origin:right center">1.477.471,17</div>
<div class="a" style="left:1516px;top:627px;width:100px;height:19px;background:#dfe7f8;border-right:1px solid #d4d8e4;border-bottom:1px solid #d4d8e4"></div>
<div class="t" style="right:307px;top:631px;transform:scaleX(0.981);transform-origin:right center">1.528.509,96</div>
<div class="a" style="left:1616px;top:627px;width:100px;height:19px;background:#dfe7f8;border-right:1px solid #d4d8e4;border-bottom:1px solid #d4d8e4"></div>
<div class="t" style="right:207px;top:631px;transform:scaleX(0.981);transform-origin:right center">1.678.748,08</div>
<div class="a" style="left:1716px;top:627px;width:100px;height:19px;background:#dfe7f8;border-right:1px solid #d4d8e4;border-bottom:1px solid #d4d8e4"></div>
<div class="t" style="right:107px;top:631px;transform:scaleX(0.981);transform-origin:right center">9.367.759,60</div>
<div class="a" style="left:839px;top:646px;width:1px;height:19px;background:#b3bacd"></div>
<div class="a" style="left:939px;top:646px;width:1px;height:19px;background:#b3bacd"></div>
<div class="a" style="left:840px;top:664px;width:276px;height:1px;background:#b3bacd"></div>
<div class="tri-d" style="left:846px;top:653px;border-top-width:6px;border-left-width:4px;border-right-width:4px"></div>
<div class="t" style="left:859px;top:650px;transform:scaleX(0.981);transform-origin:left center">12070</div>
<div class="t" style="left:945px;top:650px;transform:scaleX(0.919);transform-origin:left center">POTRAŽIVANJA OD KARTIČNIH...</div>
<div class="a" style="left:1116px;top:646px;width:100px;height:19px;background:#dfe7f8;border-right:1px solid #d4d8e4;border-bottom:1px solid #d4d8e4"></div>
<div class="t" style="right:707px;top:650px;transform:scaleX(0.981);transform-origin:right center">137.443,23</div>
<div class="a" style="left:1216px;top:646px;width:100px;height:19px;background:#dfe7f8;border-right:1px solid #d4d8e4;border-bottom:1px solid #d4d8e4"></div>
<div class="t" style="right:607px;top:650px;transform:scaleX(0.981);transform-origin:right center">103.178,22</div>
<div class="a" style="left:1316px;top:646px;width:100px;height:19px;background:#dfe7f8;border-right:1px solid #d4d8e4;border-bottom:1px solid #d4d8e4"></div>
<div class="t" style="right:507px;top:650px;transform:scaleX(0.981);transform-origin:right center">137.272,90</div>
<div class="a" style="left:1416px;top:646px;width:100px;height:19px;background:#dfe7f8;border-right:1px solid #d4d8e4;border-bottom:1px solid #d4d8e4"></div>
<div class="t" style="right:407px;top:650px;transform:scaleX(0.981);transform-origin:right center">115.513,79</div>
<div class="a" style="left:1516px;top:646px;width:100px;height:19px;background:#dfe7f8;border-right:1px solid #d4d8e4;border-bottom:1px solid #d4d8e4"></div>
<div class="t" style="right:307px;top:650px;transform:scaleX(0.981);transform-origin:right center">119.748,73</div>
<div class="a" style="left:1616px;top:646px;width:100px;height:19px;background:#dfe7f8;border-right:1px solid #d4d8e4;border-bottom:1px solid #d4d8e4"></div>
<div class="a" style="left:1616px;top:646px;width:99px;height:18px;border:1px dotted #222"></div>
<div class="t" style="right:207px;top:650px;transform:scaleX(0.981);transform-origin:right center">127.256,67</div>
<div class="a" style="left:1716px;top:646px;width:100px;height:19px;background:#e8eef9;border-right:1px solid #d4d8e4;border-bottom:1px solid #d4d8e4"></div>
<div class="t" style="right:107px;top:650px;transform:scaleX(0.981);transform-origin:right center">740.413,54</div>
<div class="a" style="left:839px;top:665px;width:1px;height:19px;background:#b3bacd"></div>
<div class="a" style="left:939px;top:665px;width:1px;height:19px;background:#b3bacd"></div>
<div class="a" style="left:840px;top:683px;width:276px;height:1px;background:#b3bacd"></div>
<div class="tri-d" style="left:846px;top:672px;border-top-width:6px;border-left-width:4px;border-right-width:4px"></div>
<div class="t" style="left:859px;top:669px;transform:scaleX(0.981);transform-origin:left center">12080</div>
<div class="t" style="left:945px;top:669px;transform:scaleX(0.908);transform-origin:left center">POTRAŽIVANJE OD KUPACA - O...</div>
<div class="a" style="left:1116px;top:665px;width:100px;height:19px;background:#fff;border-right:1px solid #d4d8e4;border-bottom:1px solid #d4d8e4"></div>
<div class="a" style="left:1216px;top:665px;width:100px;height:19px;background:#fff;border-right:1px solid #d4d8e4;border-bottom:1px solid #d4d8e4"></div>
<div class="a" style="left:1316px;top:665px;width:100px;height:19px;background:#fff;border-right:1px solid #d4d8e4;border-bottom:1px solid #d4d8e4"></div>
<div class="t" style="right:507px;top:669px;transform:scaleX(0.981);transform-origin:right center">,00</div>
<div class="a" style="left:1416px;top:665px;width:100px;height:19px;background:#fff;border-right:1px solid #d4d8e4;border-bottom:1px solid #d4d8e4"></div>
<div class="t" style="right:407px;top:669px;transform:scaleX(0.981);transform-origin:right center">,00</div>
<div class="a" style="left:1516px;top:665px;width:100px;height:19px;background:#fff;border-right:1px solid #d4d8e4;border-bottom:1px solid #d4d8e4"></div>
<div class="t" style="right:307px;top:669px;transform:scaleX(0.981);transform-origin:right center">,00</div>
<div class="a" style="left:1616px;top:665px;width:100px;height:19px;background:#fff;border-right:1px solid #d4d8e4;border-bottom:1px solid #d4d8e4"></div>
<div class="t" style="right:207px;top:669px;transform:scaleX(0.981);transform-origin:right center">,00</div>
<div class="a" style="left:1716px;top:665px;width:100px;height:19px;background:#e8eef9;border-right:1px solid #d4d8e4;border-bottom:1px solid #d4d8e4"></div>
<div class="t" style="right:107px;top:669px;transform:scaleX(0.981);transform-origin:right center">,00</div>
<div class="a" style="left:839px;top:684px;width:1px;height:19px;background:#b3bacd"></div>
<div class="a" style="left:939px;top:684px;width:1px;height:19px;background:#b3bacd"></div>
<div class="a" style="left:840px;top:702px;width:276px;height:1px;background:#b3bacd"></div>
<div class="tri-d" style="left:846px;top:691px;border-top-width:6px;border-left-width:4px;border-right-width:4px"></div>
<div class="t" style="left:859px;top:688px;transform:scaleX(0.981);transform-origin:left center">12500</div>
<div class="t" style="left:945px;top:688px;transform:scaleX(0.894);transform-origin:left center">DANI PREDUJMOVI S PDV-OM</div>
<div class="a" style="left:1116px;top:684px;width:100px;height:19px;background:#fff;border-right:1px solid #d4d8e4;border-bottom:1px solid #d4d8e4"></div>
<div class="a" style="left:1216px;top:684px;width:100px;height:19px;background:#fff;border-right:1px solid #d4d8e4;border-bottom:1px solid #d4d8e4"></div>
<div class="t" style="right:607px;top:688px;transform:scaleX(0.981);transform-origin:right center">3.177,07</div>
<div class="a" style="left:1316px;top:684px;width:100px;height:19px;background:#fff;border-right:1px solid #d4d8e4;border-bottom:1px solid #d4d8e4"></div>
<div class="t" style="right:507px;top:688px;transform:scaleX(0.981);transform-origin:right center">3.468,76</div>
<div class="a" style="left:1416px;top:684px;width:100px;height:19px;background:#fff;border-right:1px solid #d4d8e4;border-bottom:1px solid #d4d8e4"></div>
<div class="a" style="left:1516px;top:684px;width:100px;height:19px;background:#fff;border-right:1px solid #d4d8e4;border-bottom:1px solid #d4d8e4"></div>
<div class="a" style="left:1616px;top:684px;width:100px;height:19px;background:#fff;border-right:1px solid #d4d8e4;border-bottom:1px solid #d4d8e4"></div>
<div class="t" style="right:207px;top:688px;transform:scaleX(0.981);transform-origin:right center">795,17</div>
<div class="a" style="left:1716px;top:684px;width:100px;height:19px;background:#e8eef9;border-right:1px solid #d4d8e4;border-bottom:1px solid #d4d8e4"></div>
<div class="t" style="right:107px;top:688px;transform:scaleX(0.981);transform-origin:right center">7.441,00</div>
<div class="a" style="left:839px;top:703px;width:1px;height:19px;background:#b3bacd"></div>
<div class="a" style="left:939px;top:703px;width:1px;height:19px;background:#b3bacd"></div>
<div class="a" style="left:840px;top:721px;width:276px;height:1px;background:#b3bacd"></div>
<div class="tri-d" style="left:846px;top:710px;border-top-width:6px;border-left-width:4px;border-right-width:4px"></div>
<div class="t" style="left:859px;top:707px;transform:scaleX(0.981);transform-origin:left center">15000</div>
<div class="t" style="left:945px;top:707px;transform:scaleX(0.978);transform-origin:left center">Potraživanje za nadoknade bolo...</div>
<div class="a" style="left:1116px;top:703px;width:100px;height:19px;background:#fff;border-right:1px solid #d4d8e4;border-bottom:1px solid #d4d8e4"></div>
<div class="a" style="left:1216px;top:703px;width:100px;height:19px;background:#fff;border-right:1px solid #d4d8e4;border-bottom:1px solid #d4d8e4"></div>
<div class="a" style="left:1316px;top:703px;width:100px;height:19px;background:#fff;border-right:1px solid #d4d8e4;border-bottom:1px solid #d4d8e4"></div>
<div class="a" style="left:1416px;top:703px;width:100px;height:19px;background:#fff;border-right:1px solid #d4d8e4;border-bottom:1px solid #d4d8e4"></div>
<div class="a" style="left:1516px;top:703px;width:100px;height:19px;background:#fff;border-right:1px solid #d4d8e4;border-bottom:1px solid #d4d8e4"></div>
<div class="a" style="left:1616px;top:703px;width:100px;height:19px;background:#fff;border-right:1px solid #d4d8e4;border-bottom:1px solid #d4d8e4"></div>
<div class="t" style="right:207px;top:707px;transform:scaleX(0.981);transform-origin:right center">1.048,82</div>
<div class="a" style="left:1716px;top:703px;width:100px;height:19px;background:#e8eef9;border-right:1px solid #d4d8e4;border-bottom:1px solid #d4d8e4"></div>
<div class="t" style="right:107px;top:707px;transform:scaleX(0.981);transform-origin:right center">1.048,82</div>
<div class="a" style="left:839px;top:722px;width:1px;height:19px;background:#b3bacd"></div>
<div class="a" style="left:939px;top:722px;width:1px;height:19px;background:#b3bacd"></div>
<div class="a" style="left:840px;top:740px;width:276px;height:1px;background:#b3bacd"></div>
<div class="tri-d" style="left:846px;top:729px;border-top-width:6px;border-left-width:4px;border-right-width:4px"></div>
<div class="t" style="left:859px;top:726px;transform:scaleX(0.981);transform-origin:left center">22000</div>
<div class="t" style="left:945px;top:726px;transform:scaleX(0.966);transform-origin:left center">Dobavljači</div>
<div class="a" style="left:1116px;top:722px;width:100px;height:19px;background:#fff;border-right:1px solid #d4d8e4;border-bottom:1px solid #d4d8e4"></div>
<div class="a" style="left:1216px;top:722px;width:100px;height:19px;background:#fff;border-right:1px solid #d4d8e4;border-bottom:1px solid #d4d8e4"></div>
<div class="a" style="left:1316px;top:722px;width:100px;height:19px;background:#fff;border-right:1px solid #d4d8e4;border-bottom:1px solid #d4d8e4"></div>
<div class="t" style="right:507px;top:726px;transform:scaleX(0.981);transform-origin:right center">,00</div>
<div class="a" style="left:1416px;top:722px;width:100px;height:19px;background:#fff;border-right:1px solid #d4d8e4;border-bottom:1px solid #d4d8e4"></div>
<div class="a" style="left:1516px;top:722px;width:100px;height:19px;background:#fff;border-right:1px solid #d4d8e4;border-bottom:1px solid #d4d8e4"></div>
<div class="t" style="right:307px;top:726px;transform:scaleX(0.981);transform-origin:right center">504,52</div>
<div class="a" style="left:1616px;top:722px;width:100px;height:19px;background:#fff;border-right:1px solid #d4d8e4;border-bottom:1px solid #d4d8e4"></div>
<div class="a" style="left:1716px;top:722px;width:100px;height:19px;background:#e8eef9;border-right:1px solid #d4d8e4;border-bottom:1px solid #d4d8e4"></div>
<div class="t" style="right:107px;top:726px;transform:scaleX(0.981);transform-origin:right center">504,52</div>
<div class="a" style="left:839px;top:741px;width:1px;height:19px;background:#b3bacd"></div>
<div class="a" style="left:939px;top:741px;width:1px;height:19px;background:#b3bacd"></div>
<div class="a" style="left:840px;top:759px;width:276px;height:1px;background:#b3bacd"></div>
<div class="tri-d" style="left:846px;top:748px;border-top-width:6px;border-left-width:4px;border-right-width:4px"></div>
<div class="t" style="left:859px;top:745px;transform:scaleX(0.981);transform-origin:left center">22500</div>
<div class="t" style="left:945px;top:745px;transform:scaleX(0.962);transform-origin:left center">Primljeni predujmovi za koje su i...</div>
<div class="a" style="left:1116px;top:741px;width:100px;height:19px;background:#fff;border-right:1px solid #d4d8e4;border-bottom:1px solid #d4d8e4"></div>
<div class="t" style="right:707px;top:745px;transform:scaleX(0.981);transform-origin:right center">,00</div>
<div class="a" style="left:1216px;top:741px;width:100px;height:19px;background:#fff;border-right:1px solid #d4d8e4;border-bottom:1px solid #d4d8e4"></div>
<div class="t" style="right:607px;top:745px;transform:scaleX(0.981);transform-origin:right center">,00</div>
<div class="a" style="left:1316px;top:741px;width:100px;height:19px;background:#fff;border-right:1px solid #d4d8e4;border-bottom:1px solid #d4d8e4"></div>
<div class="t" style="right:507px;top:745px;transform:scaleX(0.981);transform-origin:right center">,00</div>
<div class="a" style="left:1416px;top:741px;width:100px;height:19px;background:#fff;border-right:1px solid #d4d8e4;border-bottom:1px solid #d4d8e4"></div>
<div class="t" style="right:407px;top:745px;transform:scaleX(0.981);transform-origin:right center">,00</div>
<div class="a" style="left:1516px;top:741px;width:100px;height:19px;background:#fff;border-right:1px solid #d4d8e4;border-bottom:1px solid #d4d8e4"></div>
<div class="t" style="right:307px;top:745px;transform:scaleX(0.981);transform-origin:right center">8.403,73</div>
<div class="a" style="left:1616px;top:741px;width:100px;height:19px;background:#fff;border-right:1px solid #d4d8e4;border-bottom:1px solid #d4d8e4"></div>
<div class="t" style="right:207px;top:745px;transform:scaleX(0.981);transform-origin:right center">10.227,47</div>
<div class="a" style="left:1716px;top:741px;width:100px;height:19px;background:#e8eef9;border-right:1px solid #d4d8e4;border-bottom:1px solid #d4d8e4"></div>
<div class="t" style="right:107px;top:745px;transform:scaleX(0.981);transform-origin:right center">18.631,20</div>
<div class="a" style="left:839px;top:760px;width:1px;height:4px;background:#b3bacd"></div><div class="a" style="left:939px;top:760px;width:1px;height:4px;background:#b3bacd"></div>
<div class="a" style="left:1116px;top:760px;width:100px;height:4px;background:#fff;border-right:1px solid #d4d8e4"></div>
<div class="a" style="left:1216px;top:760px;width:100px;height:4px;background:#fff;border-right:1px solid #d4d8e4"></div>
<div class="a" style="left:1316px;top:760px;width:100px;height:4px;background:#fff;border-right:1px solid #d4d8e4"></div>
<div class="a" style="left:1416px;top:760px;width:100px;height:4px;background:#fff;border-right:1px solid #d4d8e4"></div>
<div class="a" style="left:1516px;top:760px;width:100px;height:4px;background:#fff;border-right:1px solid #d4d8e4"></div>
<div class="a" style="left:1616px;top:760px;width:100px;height:4px;background:#fff;border-right:1px solid #d4d8e4"></div>
<div class="a" style="left:1716px;top:760px;width:100px;height:4px;background:#e8eef9;border-right:1px solid #d4d8e4"></div>
<div class="a" style="left:678px;top:764px;width:1229px;height:1px;background:#b4b8c4"></div>
<div class="a" style="left:678px;top:140px;width:1px;height:625px;background:#b4b8c4"></div>
<div class="a" style="left:1885px;top:141px;width:22px;height:624px;background:#98b4d6;border-right:1px solid #b4b8c4"></div>
<div class="a" style="left:1888px;top:368px;width:15px;height:317px;background:#6679a3;border-radius:2px"></div>
<div class="tri-u" style="left:1892px;top:149px;border-bottom-color:#0a0a64;border-bottom-width:5px"></div>
<div class="tri-d" style="left:1892px;top:751px;border-top-width:5px"></div>
<div class="a" style="left:1892px;top:524px;width:8px;height:1px;background:#9fb0d0"></div>
<div class="a" style="left:1892px;top:526px;width:8px;height:1px;background:#9fb0d0"></div>
<div class="a" style="left:1892px;top:528px;width:8px;height:1px;background:#9fb0d0"></div>
<div class="a" style="left:1286px;top:772px;width:12px;height:1px;background:#6f8fd0"></div><div class="a" style="left:1286px;top:774px;width:12px;height:1px;background:#6f8fd0"></div>
<div class="grp" style="left:675px;top:780px;width:1235px;height:236px;border-color:#6f9bd1"><div class="grph" style="height:21px"></div></div>
<div class="t" style="left:687px;top:786px;transform:scaleX(0.982);transform-origin:left center">Graf</div>
<svg class="a" style="left:1895px;top:788px" width="9" height="6" viewBox="0 0 9 6"><path d="M1 5l3.500-3.500L8 5" fill="none" stroke="#0a0a64" stroke-width="1.500"/></svg>
<div class="a" style="left:678px;top:802px;width:1229px;height:211px;background:#fff;border:1px solid #b4b8c4"></div>
<svg class="a" style="left:0;top:0" width="1920" height="1029" viewBox="0 0 1920 1029"><path d="M750 813.5H1838" stroke="#dcdcdc" stroke-width="1"/><path d="M750 834.5H1838" stroke="#dcdcdc" stroke-width="1"/><path d="M750 855.5H1838" stroke="#dcdcdc" stroke-width="1"/><path d="M750 877.5H1838" stroke="#dcdcdc" stroke-width="1"/><path d="M1838.500 813v85" stroke="#dcdcdc" stroke-width="1"/><path d="M750.500 813v85.500H1839" fill="none" stroke="#8c8c8c" stroke-width="1"/><path d="M745 898.5H750" stroke="#8c8c8c" stroke-width="1"/><path d="M748 891.4H750" stroke="#8c8c8c" stroke-width="1"/><path d="M748 884.3H750" stroke="#8c8c8c" stroke-width="1"/><path d="M745 877.2H750" stroke="#8c8c8c" stroke-width="1"/><path d="M748 870.1H750" stroke="#8c8c8c" stroke-width="1"/><path d="M748 863.0H750" stroke="#8c8c8c" stroke-width="1"/><path d="M745 855.9H750" stroke="#8c8c8c" stroke-width="1"/><path d="M748 848.8H750" stroke="#8c8c8c" stroke-width="1"/><path d="M748 841.7H750" stroke="#8c8c8c" stroke-width="1"/><path d="M745 834.6H750" stroke="#8c8c8c" stroke-width="1"/><path d="M748 827.5H750" stroke="#8c8c8c" stroke-width="1"/><path d="M748 820.4H750" stroke="#8c8c8c" stroke-width="1"/><path d="M786.3 899v2" stroke="#8c8c8c" stroke-width="1"/><path d="M858.9 899v2" stroke="#8c8c8c" stroke-width="1"/><path d="M931.5 899v5" stroke="#8c8c8c" stroke-width="1"/><path d="M1004.1 899v2" stroke="#8c8c8c" stroke-width="1"/><path d="M1076.7 899v2" stroke="#8c8c8c" stroke-width="1"/><path d="M1149.3 899v2" stroke="#8c8c8c" stroke-width="1"/><path d="M1221.9 899v2" stroke="#8c8c8c" stroke-width="1"/><path d="M1294.5 899v5" stroke="#8c8c8c" stroke-width="1"/><path d="M1367.1 899v2" stroke="#8c8c8c" stroke-width="1"/><path d="M1439.7 899v2" stroke="#8c8c8c" stroke-width="1"/><path d="M1512.3 899v2" stroke="#8c8c8c" stroke-width="1"/><path d="M1584.9 899v2" stroke="#8c8c8c" stroke-width="1"/><path d="M1657.5 899v5" stroke="#8c8c8c" stroke-width="1"/><path d="M1730.1 899v2" stroke="#8c8c8c" stroke-width="1"/><path d="M1802.7 899v2" stroke="#8c8c8c" stroke-width="1"/><path d="M931.5 885.3C1052.5 868.8 1173.5 834.6 1294.5 835.7C1415.5 836.9 1536.5 873.3 1657.5 892.1" fill="none" stroke="#8fd14f" stroke-width="2"/><path d="M931.5 877.5C1052.5 863.4 1173.5 832.4 1294.5 835.1C1415.5 837.8 1536.5 874.1 1657.5 893.6" fill="none" stroke="#e8488b" stroke-width="2"/><path d="M931.5 875.5C1052.5 858.2 1173.5 820.9 1294.5 823.6C1415.5 826.4 1536.5 869.3 1657.5 892.2" fill="none" stroke="#f5b829" stroke-width="2"/><path d="M931.5 876.7C1052.5 862.8 1173.5 832.3 1294.5 835.1C1415.5 837.8 1536.5 873.7 1657.5 893.1" fill="none" stroke="#3db5e6" stroke-width="2"/><path d="M931.5 877.8C1052.5 862.9 1173.5 830.4 1294.5 832.9C1415.5 835.4 1536.5 872.9 1657.5 892.9" fill="none" stroke="#8e9bd4" stroke-width="2"/><path d="M931.5 864.2C1052.5 851.6 1173.5 821.8 1294.5 826.5C1415.5 831.2 1536.5 870.5 1657.5 892.6" fill="none" stroke="#2fb5a0" stroke-width="2"/><rect x="1849.500" y="813.500" width="46" height="123" fill="#fff" stroke="#a0a0a0" stroke-width="1"/><path d="M1852.800 823C1852.800 818 1857.500 817 1861.500 824.5S1869.500 835 1872.200 827" fill="none" stroke="#8fd14f" stroke-width="1.500"/><path d="M1852.800 843C1852.800 838 1857.500 837 1861.500 844.5S1869.500 855 1872.200 847" fill="none" stroke="#e8488b" stroke-width="1.500"/><path d="M1852.800 863C1852.800 858 1857.500 857 1861.500 864.5S1869.500 875 1872.200 867" fill="none" stroke="#f5b829" stroke-width="1.500"/><path d="M1852.800 883C1852.800 878 1857.500 877 1861.500 884.5S1869.500 895 1872.200 887" fill="none" stroke="#3db5e6" stroke-width="1.500"/><path d="M1852.800 903C1852.800 898 1857.500 897 1861.500 904.5S1869.500 915 1872.200 907" fill="none" stroke="#8e9bd4" stroke-width="1.500"/><path d="M1852.800 923C1852.800 918 1857.500 917 1861.500 924.5S1869.500 935 1872.200 927" fill="none" stroke="#2fb5a0" stroke-width="1.500"/></svg>
<div class="t f13" style="left:1876px;top:818px;color:#222;transform:scaleX(0.967);transform-origin:left center">01</div>
<div class="t f13" style="left:1876px;top:838px;color:#222;transform:scaleX(0.967);transform-origin:left center">02</div>
<div class="t f13" style="left:1876px;top:858px;color:#222;transform:scaleX(0.967);transform-origin:left center">03</div>
<div class="t f13" style="left:1876px;top:878px;color:#222;transform:scaleX(0.967);transform-origin:left center">04</div>
<div class="t f13" style="left:1876px;top:898px;color:#222;transform:scaleX(0.967);transform-origin:left center">05</div>
<div class="t f13" style="left:1876px;top:918px;color:#222;transform:scaleX(0.967);transform-origin:left center">06</div>
<div class="t f13" style="right:1183px;top:848px;color:#222;transform:scaleX(0.967);transform-origin:right center">1000000</div>
<div class="t f13" style="right:1181px;top:891px;color:#222;transform:scaleX(0.967);transform-origin:right center">0</div>
<div class="t f13" style="left:731px;width:400px;text-align:center;top:959.0px;color:#222;transform:scaleX(0.947);transform-origin:center center">UPLATA DOMICILNA | 10090</div>
<div class="t f13" style="left:731px;width:400px;text-align:center;top:975.5px;color:#222">| Žiro-račun prijelazni konto</div>
<div class="t f13" style="left:1094px;width:400px;text-align:center;top:909.0px;color:#222;transform:scaleX(0.947);transform-origin:center center">UPLATA DOMICILNA | 12000</div>
<div class="t f13" style="left:1094px;width:400px;text-align:center;top:925.5px;color:#222;transform:scaleX(0.983);transform-origin:center center">| Potraživanja od kupaca</div>
<div class="t f13" style="left:1094px;width:400px;text-align:center;top:942.0px;color:#222;transform:scaleX(0.968);transform-origin:center center">dobara</div>
<div class="t f13" style="left:1457px;width:400px;text-align:center;top:959.0px;color:#222;transform:scaleX(0.947);transform-origin:center center">UPLATA DOMICILNA | 12070</div>
<div class="t f13" style="left:1457px;width:400px;text-align:center;top:975.5px;color:#222;transform:scaleX(0.925);transform-origin:center center">| POTRAŽIVANJA OD</div>
<div class="t f13" style="left:1457px;width:400px;text-align:center;top:992.0px;color:#222;transform:scaleX(0.914);transform-origin:center center">KARTIČNIH KUĆA</div>
</body></html>
